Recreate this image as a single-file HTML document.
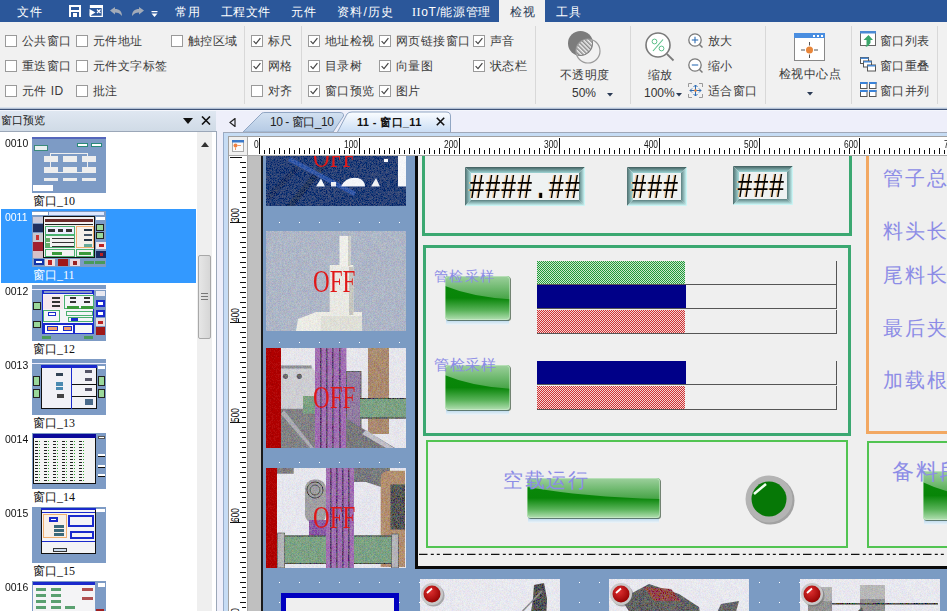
<!DOCTYPE html><html><head><meta charset="utf-8"><style>
html,body{margin:0;padding:0;width:947px;height:611px;overflow:hidden;background:#f1f1f1;font-family:"Liberation Sans",sans-serif;}
div,svg{position:absolute;box-sizing:border-box;}
.t{line-height:1;white-space:nowrap;}
.serif{font-family:"Liberation Serif",serif;}
</style></head><body>
<div style="left:0px;top:0px;width:947px;height:22px;background:#2b579a"></div>
<div style="left:499px;top:0px;width:46px;height:23px;background:#f1f1f1"></div>
<div class="t" style="left:17px;top:6px;font-size:12px;color:#fff;letter-spacing:0.5px">文件</div>
<div class="t" style="left:175px;top:6px;font-size:12px;color:#fff;letter-spacing:0.5px">常用</div>
<div class="t" style="left:221px;top:6px;font-size:12px;color:#fff;letter-spacing:0.3px">工程文件</div>
<div class="t" style="left:291px;top:6px;font-size:12px;color:#fff;letter-spacing:0.5px">元件</div>
<div class="t" style="left:337px;top:6px;font-size:12px;color:#fff;letter-spacing:1.2px">资料/历史</div>
<div class="t" style="left:412px;top:6px;font-size:12px;color:#fff;letter-spacing:0.6px"><span style='font-family:Liberation Serif,serif'>II</span>oT/能源管理</div>
<div class="t" style="left:556px;top:6px;font-size:12px;color:#fff;letter-spacing:0.5px">工具</div>
<div class="t" style="left:510px;top:6px;font-size:12px;color:#2b3b55;letter-spacing:0.5px">检视</div>
<svg style="left:69px;top:5px" width="12" height="12" viewBox="0 0 12 12" shape-rendering="crispEdges"><rect x="0" y="0" width="12" height="12" fill="#fff"/><rect x="2" y="1.5" width="8" height="3" fill="#2b579a"/><rect x="2" y="7" width="8" height="5" fill="#2b579a"/><rect x="4" y="8" width="4" height="4" fill="#fff"/></svg>
<svg style="left:89px;top:5px" width="14" height="12" viewBox="0 0 14 12"><path d="M1.5 8 V11.3 H13.3 V0.7 H1.5 V3" fill="none" stroke="#fff" stroke-width="1.3"/><rect x="1" y="0" width="13" height="3" fill="#fff"/><path d="M0.5 4 L6.5 7.5 L0.5 11 Z" fill="#fff"/><path d="M8 4.5 L11.5 8 M11.5 4.5 L8 8" stroke="#fff" stroke-width="1.2"/></svg>
<svg style="left:110px;top:7px" width="13" height="10" viewBox="0 0 13 10"><path d="M0 3.5 L5 0 L5 2 C9.5 2 12 4.5 12 9 C10 6.5 8 5.5 5 5.5 L5 7.5 Z" fill="#a3abb8"/></svg>
<svg style="left:131px;top:7px" width="13" height="10" viewBox="0 0 13 10"><path d="M13 3.5 L8 0 L8 2 C3.5 2 1 4.5 1 9 C3 6.5 5 5.5 8 5.5 L8 7.5 Z" fill="#a3abb8"/></svg>
<svg style="left:151px;top:11px" width="7" height="7" viewBox="0 0 7 7"><rect x="0.5" y="0" width="6" height="1.2" fill="#fff"/><path d="M0.5 2.5 L6.5 2.5 L3.5 6 Z" fill="#fff"/></svg>
<div style="left:0px;top:22px;width:947px;height:85px;background:#f1f1f1"></div>
<div style="left:0px;top:107px;width:947px;height:1px;background:#dae3ee"></div>
<div style="left:0px;top:108px;width:947px;height:1px;background:#b4c0d2"></div>
<div style="left:0px;top:109px;width:947px;height:1px;background:#3f5479"></div>
<div style="left:0px;top:110px;width:947px;height:1px;background:#f4f6fc"></div>
<div style="left:244px;top:26px;width:1px;height:78px;background:#d8d8d8"></div>
<div style="left:301px;top:26px;width:1px;height:78px;background:#d8d8d8"></div>
<div style="left:535px;top:26px;width:1px;height:78px;background:#d8d8d8"></div>
<div style="left:630px;top:26px;width:1px;height:78px;background:#d8d8d8"></div>
<div style="left:765px;top:26px;width:1px;height:78px;background:#d8d8d8"></div>
<div style="left:851px;top:26px;width:1px;height:78px;background:#d8d8d8"></div>
<div style="left:937px;top:26px;width:1px;height:78px;background:#d8d8d8"></div>
<div style="left:5px;top:35px;width:12px;height:12px;border:1px solid #9a9a9a;background:#fff"></div>
<div class="t" style="left:22px;top:35px;font-size:12px;color:#3c3c3c;letter-spacing:0.45px">公共窗口</div>
<div style="left:76px;top:35px;width:12px;height:12px;border:1px solid #9a9a9a;background:#fff"></div>
<div class="t" style="left:93px;top:35px;font-size:12px;color:#3c3c3c;letter-spacing:0.45px">元件地址</div>
<div style="left:171px;top:35px;width:12px;height:12px;border:1px solid #9a9a9a;background:#fff"></div>
<div class="t" style="left:188px;top:35px;font-size:12px;color:#3c3c3c;letter-spacing:0.45px">触控区域</div>
<div style="left:5px;top:60px;width:12px;height:12px;border:1px solid #9a9a9a;background:#fff"></div>
<div class="t" style="left:22px;top:60px;font-size:12px;color:#3c3c3c;letter-spacing:0.45px">重迭窗口</div>
<div style="left:76px;top:60px;width:12px;height:12px;border:1px solid #9a9a9a;background:#fff"></div>
<div class="t" style="left:93px;top:60px;font-size:12px;color:#3c3c3c;letter-spacing:0.45px">元件文字标签</div>
<div style="left:5px;top:85px;width:12px;height:12px;border:1px solid #9a9a9a;background:#fff"></div>
<div class="t" style="left:22px;top:85px;font-size:12px;color:#3c3c3c;letter-spacing:0.45px">元件 ID</div>
<div style="left:76px;top:85px;width:12px;height:12px;border:1px solid #9a9a9a;background:#fff"></div>
<div class="t" style="left:93px;top:85px;font-size:12px;color:#3c3c3c;letter-spacing:0.45px">批注</div>
<div style="left:251px;top:35px;width:12px;height:12px;border:1px solid #9a9a9a;background:#fff"></div>
<svg style="left:251px;top:35px" width="12" height="12" viewBox="0 0 12 12"><path d="M2.6 6.2 L5 8.6 L9.4 3.2" fill="none" stroke="#444" stroke-width="1.2"/></svg>
<div class="t" style="left:268px;top:35px;font-size:12px;color:#3c3c3c;letter-spacing:0.45px">标尺</div>
<div style="left:251px;top:60px;width:12px;height:12px;border:1px solid #9a9a9a;background:#fff"></div>
<svg style="left:251px;top:60px" width="12" height="12" viewBox="0 0 12 12"><path d="M2.6 6.2 L5 8.6 L9.4 3.2" fill="none" stroke="#444" stroke-width="1.2"/></svg>
<div class="t" style="left:268px;top:60px;font-size:12px;color:#3c3c3c;letter-spacing:0.45px">网格</div>
<div style="left:251px;top:85px;width:12px;height:12px;border:1px solid #9a9a9a;background:#fff"></div>
<div class="t" style="left:268px;top:85px;font-size:12px;color:#3c3c3c;letter-spacing:0.45px">对齐</div>
<div style="left:308px;top:35px;width:12px;height:12px;border:1px solid #9a9a9a;background:#fff"></div>
<svg style="left:308px;top:35px" width="12" height="12" viewBox="0 0 12 12"><path d="M2.6 6.2 L5 8.6 L9.4 3.2" fill="none" stroke="#444" stroke-width="1.2"/></svg>
<div class="t" style="left:325px;top:35px;font-size:12px;color:#3c3c3c;letter-spacing:0.45px">地址检视</div>
<div style="left:308px;top:60px;width:12px;height:12px;border:1px solid #9a9a9a;background:#fff"></div>
<svg style="left:308px;top:60px" width="12" height="12" viewBox="0 0 12 12"><path d="M2.6 6.2 L5 8.6 L9.4 3.2" fill="none" stroke="#444" stroke-width="1.2"/></svg>
<div class="t" style="left:325px;top:60px;font-size:12px;color:#3c3c3c;letter-spacing:0.45px">目录树</div>
<div style="left:308px;top:85px;width:12px;height:12px;border:1px solid #9a9a9a;background:#fff"></div>
<svg style="left:308px;top:85px" width="12" height="12" viewBox="0 0 12 12"><path d="M2.6 6.2 L5 8.6 L9.4 3.2" fill="none" stroke="#444" stroke-width="1.2"/></svg>
<div class="t" style="left:325px;top:85px;font-size:12px;color:#3c3c3c;letter-spacing:0.45px">窗口预览</div>
<div style="left:379px;top:35px;width:12px;height:12px;border:1px solid #9a9a9a;background:#fff"></div>
<svg style="left:379px;top:35px" width="12" height="12" viewBox="0 0 12 12"><path d="M2.6 6.2 L5 8.6 L9.4 3.2" fill="none" stroke="#444" stroke-width="1.2"/></svg>
<div class="t" style="left:396px;top:35px;font-size:12px;color:#3c3c3c;letter-spacing:0.45px">网页链接窗口</div>
<div style="left:379px;top:60px;width:12px;height:12px;border:1px solid #9a9a9a;background:#fff"></div>
<svg style="left:379px;top:60px" width="12" height="12" viewBox="0 0 12 12"><path d="M2.6 6.2 L5 8.6 L9.4 3.2" fill="none" stroke="#444" stroke-width="1.2"/></svg>
<div class="t" style="left:396px;top:60px;font-size:12px;color:#3c3c3c;letter-spacing:0.45px">向量图</div>
<div style="left:379px;top:85px;width:12px;height:12px;border:1px solid #9a9a9a;background:#fff"></div>
<svg style="left:379px;top:85px" width="12" height="12" viewBox="0 0 12 12"><path d="M2.6 6.2 L5 8.6 L9.4 3.2" fill="none" stroke="#444" stroke-width="1.2"/></svg>
<div class="t" style="left:396px;top:85px;font-size:12px;color:#3c3c3c;letter-spacing:0.45px">图片</div>
<div style="left:473px;top:35px;width:12px;height:12px;border:1px solid #9a9a9a;background:#fff"></div>
<svg style="left:473px;top:35px" width="12" height="12" viewBox="0 0 12 12"><path d="M2.6 6.2 L5 8.6 L9.4 3.2" fill="none" stroke="#444" stroke-width="1.2"/></svg>
<div class="t" style="left:490px;top:35px;font-size:12px;color:#3c3c3c;letter-spacing:0.45px">声音</div>
<div style="left:473px;top:60px;width:12px;height:12px;border:1px solid #9a9a9a;background:#fff"></div>
<svg style="left:473px;top:60px" width="12" height="12" viewBox="0 0 12 12"><path d="M2.6 6.2 L5 8.6 L9.4 3.2" fill="none" stroke="#444" stroke-width="1.2"/></svg>
<div class="t" style="left:490px;top:60px;font-size:12px;color:#3c3c3c;letter-spacing:0.45px">状态栏</div>
<svg style="left:565px;top:29px" width="40" height="36" viewBox="0 0 40 36">
<defs><pattern id="hat" width="3" height="3" patternUnits="userSpaceOnUse" patternTransform="rotate(-45)"><rect width="3" height="3" fill="#f0f0f0"/><rect width="1.5" height="3" fill="#8a8a8a"/></pattern>
<clipPath id="c1"><circle cx="15" cy="14" r="12"/></clipPath></defs>
<circle cx="15.5" cy="14.4" r="12.5" fill="#7c7c7c"/>
<circle cx="23" cy="22" r="12" fill="url(#hat)" clip-path="url(#c1)"/>
<circle cx="23" cy="22" r="12" fill="none" stroke="#9a9a9a" stroke-width="1.2"/>
</svg>
<div class="t" style="left:560px;top:69px;font-size:12px;color:#3c3c3c;letter-spacing:0.45px">不透明度</div>
<div class="t" style="left:572px;top:87px;font-size:12px;color:#333;">50%</div>
<svg style="left:607px;top:93px" width="6" height="4" viewBox="0 0 6 4"><path d="M0 0 L6 0 L3 3.5Z" fill="#2b3b55"/></svg>
<svg style="left:644px;top:31px" width="32" height="32" viewBox="0 0 32 32">
<circle cx="14" cy="14" r="12" fill="#fff" stroke="#7a7a7a" stroke-width="1.6"/>
<path d="M22.8 22.8 L29.5 29.5" stroke="#7a7a7a" stroke-width="1.8"/>
<path d="M9 20 L19 8.5" stroke="#5cc08a" stroke-width="1.1"/>
<circle cx="10.5" cy="10.5" r="2.4" fill="none" stroke="#5cc08a" stroke-width="1"/>
<circle cx="17.5" cy="17.5" r="2.4" fill="none" stroke="#5cc08a" stroke-width="1"/>
</svg>
<div class="t" style="left:648px;top:69px;font-size:12px;color:#3c3c3c;letter-spacing:0.45px">缩放</div>
<div class="t" style="left:644px;top:87px;font-size:12px;color:#333;">100%</div>
<svg style="left:676px;top:93px" width="6" height="4" viewBox="0 0 6 4"><path d="M0 0 L6 0 L3 3.5Z" fill="#2b3b55"/></svg>
<svg style="left:688px;top:33px" width="16" height="16" viewBox="0 0 16 16">
<circle cx="7" cy="7" r="6.2" fill="#fff" stroke="#7a7a7a" stroke-width="1.3"/>
<path d="M11.5 11.5 L14.5 14.5" stroke="#7a7a7a" stroke-width="1.5"/>
<path d="M3.8 7 L10.2 7" stroke="#2e6db4" stroke-width="1.1"/>
<path d="M7 3.8 L7 10.2" stroke="#2e6db4" stroke-width="1.1"/>
</svg>
<svg style="left:688px;top:58px" width="16" height="16" viewBox="0 0 16 16">
<circle cx="7" cy="7" r="6.2" fill="#fff" stroke="#7a7a7a" stroke-width="1.3"/>
<path d="M11.5 11.5 L14.5 14.5" stroke="#7a7a7a" stroke-width="1.5"/>
<path d="M3.8 7 L10.2 7" stroke="#2e6db4" stroke-width="1.1"/>

</svg>
<svg style="left:688px;top:83px" width="15" height="15" viewBox="0 0 15 15">
<path d="M0.5 4 V0.5 H4 M11 0.5 H14.5 V4 M14.5 11 V14.5 H11 M4 14.5 H0.5 V11" fill="none" stroke="#999" stroke-width="1"/>
<path d="M7.5 2 V13 M2 7.5 H13" stroke="#2e6db4" stroke-width="1"/>
<path d="M5.5 4 L7.5 2 L9.5 4 M5.5 11 L7.5 13 L9.5 11 M4 5.5 L2 7.5 L4 9.5 M11 5.5 L13 7.5 L11 9.5" fill="none" stroke="#2e6db4" stroke-width="1"/>
<circle cx="7.5" cy="7.5" r="1.3" fill="#e8863a"/>
</svg>
<div class="t" style="left:708px;top:35px;font-size:12px;color:#3c3c3c;letter-spacing:0.45px">放大</div>
<div class="t" style="left:708px;top:60px;font-size:12px;color:#3c3c3c;letter-spacing:0.45px">缩小</div>
<div class="t" style="left:708px;top:85px;font-size:12px;color:#3c3c3c;letter-spacing:0.45px">适合窗口</div>
<svg style="left:794px;top:33px" width="32" height="30" viewBox="0 0 32 30">
<rect x="0.5" y="0.5" width="30" height="27" fill="#fff" stroke="#888" stroke-width="1"/>
<rect x="0" y="0" width="31" height="5" fill="#4a8ee0"/>
<rect x="19" y="2" width="2" height="2" fill="#fff"/><rect x="23" y="2" width="2" height="2" fill="#fff"/><rect x="27" y="2" width="2" height="2" fill="#fff"/>
<path d="M15.5 9 V12.5 M15.5 21.5 V25 M7 17 H11 M20 17 H24" stroke="#555" stroke-width="1"/>
<circle cx="15.5" cy="17" r="3.5" fill="#e8863a"/>
</svg>
<div class="t" style="left:779px;top:68px;font-size:12px;color:#3c3c3c;letter-spacing:0.45px">检视中心点</div>
<svg style="left:807px;top:92px" width="6" height="4" viewBox="0 0 6 4"><path d="M0 0 L6 0 L3 3.5Z" fill="#2b3b55"/></svg>
<svg style="left:860px;top:31px" width="17" height="17" viewBox="0 0 17 17">
<rect x="0.5" y="0.5" width="15" height="14" fill="#fff" stroke="#666"/>
<rect x="0" y="0" width="16" height="2.5" fill="#4a8ad4"/>
<path d="M3.5 9 L8.5 4 L13 9 H10.5 V12 Q9 15 5.5 16 Q7 14 6.5 12 V9 Z" fill="#3aa66a"/>
</svg>
<svg style="left:860px;top:57px" width="17" height="15" viewBox="0 0 17 15">
<rect x="0.5" y="0.5" width="8" height="6" fill="#fff" stroke="#555"/>
<rect x="3.5" y="4" width="8" height="6" fill="#fff" stroke="#555"/>
<rect x="7.5" y="8" width="8" height="6" fill="#fff" stroke="#555"/>
<rect x="0.5" y="0.5" width="8" height="1.5" fill="#4a8ad4"/><rect x="3.5" y="4" width="8" height="1.5" fill="#4a8ad4"/><rect x="7.5" y="8" width="8" height="1.5" fill="#4a8ad4"/>
</svg>
<svg style="left:860px;top:82px" width="17" height="15" viewBox="0 0 17 15">
<rect x="0.5" y="0.5" width="6.5" height="6" fill="#fff" stroke="#555"/><rect x="9.5" y="0.5" width="6.5" height="6" fill="#fff" stroke="#555"/>
<rect x="0.5" y="8.5" width="6.5" height="6" fill="#fff" stroke="#555"/><rect x="9.5" y="8.5" width="6.5" height="6" fill="#fff" stroke="#555"/>
<rect x="0" y="0" width="7.5" height="2" fill="#3a82d8"/><rect x="9" y="0" width="7.5" height="2" fill="#3a82d8"/>
<rect x="0" y="8" width="7.5" height="2" fill="#3a82d8"/><rect x="9" y="8" width="7.5" height="2" fill="#3a82d8"/>
</svg>
<div class="t" style="left:880px;top:35px;font-size:12px;color:#3c3c3c;letter-spacing:0.45px">窗口列表</div>
<div class="t" style="left:880px;top:60px;font-size:12px;color:#3c3c3c;letter-spacing:0.45px">窗口重叠</div>
<div class="t" style="left:880px;top:85px;font-size:12px;color:#3c3c3c;letter-spacing:0.45px">窗口并列</div>
<div style="left:0px;top:111px;width:947px;height:500px;background:#eeeffa"></div>
<div style="left:0px;top:111px;width:216px;height:21px;background:linear-gradient(#dfe7f1,#cfdae6)"></div>
<div class="t" style="left:1px;top:115px;font-size:11.3px;color:#222;">窗口预览</div>
<svg style="left:183px;top:118px" width="10" height="6" viewBox="0 0 10 6"><path d="M0 0 H10 L5 6Z" fill="#111"/></svg>
<svg style="left:201px;top:116px" width="10" height="9" viewBox="0 0 10 9"><path d="M1 0.5 L9 8.5 M9 0.5 L1 8.5" stroke="#111" stroke-width="1.6"/></svg>
<div style="left:0px;top:131px;width:217px;height:480px;background:#fff;border-top:1px solid #9ba7b8;border-right:1px solid #9ba7b8"></div>
<div style="left:197px;top:132px;width:15px;height:479px;background:#efefef"></div>
<svg style="left:201px;top:142px" width="8" height="5" viewBox="0 0 8 5"><path d="M0 5 L4 0 L8 5Z" fill="#333"/></svg>
<div style="left:198px;top:255px;width:13px;height:84px;background:linear-gradient(90deg,#e6e6e6,#d6d6d6);border:1px solid #a8a8a8;border-radius:2px"></div>
<div style="left:201px;top:293px;width:7px;height:1px;background:#777"></div>
<div style="left:201px;top:296px;width:7px;height:1px;background:#777"></div>
<div style="left:201px;top:299px;width:7px;height:1px;background:#777"></div>
<div class="t" style="left:5px;top:138px;font-size:11px;color:#111;transform-origin:0 0;transform:scaleX(0.95)">0010</div>
<div style="left:32px;top:137px;width:74px;height:56px;background:#7d9bc5"></div>
<div style="left:32px;top:137px;width:74px;height:2px;background:#5566bb"></div>
<div style="left:34px;top:145px;width:14px;height:6px;background:#e8f0f0;border:1px solid #3a8a7a"></div>
<div style="left:77px;top:143px;width:11px;height:4px;background:#fff;border:1px solid #2a8a7a"></div>
<div style="left:91px;top:143px;width:11px;height:4px;background:#fff;border:1px solid #2a8a7a"></div>
<div style="left:50px;top:153px;width:38px;height:20px;border:1px solid #eee"></div>
<div style="left:44px;top:156px;width:14px;height:6px;background:#eee"></div>
<div style="left:44px;top:167px;width:14px;height:6px;background:#eee"></div>
<div style="left:44px;top:178px;width:14px;height:3px;background:#eee"></div>
<div style="left:63px;top:156px;width:14px;height:6px;background:#eee"></div>
<div style="left:63px;top:167px;width:14px;height:6px;background:#eee"></div>
<div style="left:63px;top:178px;width:14px;height:3px;background:#eee"></div>
<div style="left:82px;top:156px;width:14px;height:6px;background:#eee"></div>
<div style="left:82px;top:167px;width:14px;height:6px;background:#eee"></div>
<div style="left:82px;top:178px;width:14px;height:3px;background:#eee"></div>
<div style="left:33px;top:185px;width:20px;height:6px;background:#fff"></div>
<div class="t" style="left:33px;top:195px;font-size:12px;color:#111">窗口<span style="font-family:'Liberation Serif',serif">_10</span></div>
<div style="left:1px;top:209px;width:195px;height:74px;background:#3399ff"></div>
<div class="t" style="left:5px;top:212px;font-size:11px;color:#fff;transform-origin:0 0;transform:scaleX(0.95)">0011</div>
<div style="left:32px;top:211px;width:74px;height:56px;background:#7d9bc5"></div>
<div style="left:32px;top:212px;width:16px;height:3px;background:#fff"></div>
<div style="left:49px;top:212px;width:55px;height:3px;background:#dfe8ff"></div>
<div style="left:43px;top:216px;width:52px;height:42px;background:#f2f2f2;border:1px solid #111"></div>
<div style="left:45px;top:219px;width:48px;height:3px;background:#6a2a2a"></div>
<div style="left:45px;top:224px;width:48px;height:1px;background:#222"></div>
<div style="left:45px;top:226px;width:30px;height:9px;border:1px solid #4ab070;background:#eef"></div>
<div style="left:48px;top:229px;width:7px;height:3px;background:#333"></div>
<div style="left:58px;top:229px;width:5px;height:3px;background:#333"></div>
<div style="left:66px;top:229px;width:6px;height:3px;background:#333"></div>
<div style="left:45px;top:235px;width:30px;height:13px;border:1px solid #4ab070"></div>
<div style="left:52px;top:238px;width:22px;height:1px;background:#333"></div>
<div style="left:52px;top:242px;width:22px;height:1px;background:#333"></div>
<div style="left:52px;top:246px;width:22px;height:1px;background:#333"></div>
<div style="left:46px;top:238px;width:4px;height:4px;background:#6a6"></div>
<div style="left:46px;top:243px;width:4px;height:4px;background:#6a6"></div>
<div style="left:45px;top:249px;width:30px;height:8px;border:1px solid #4ab070"></div>
<div style="left:52px;top:252px;width:10px;height:3px;background:#3a9a3a"></div>
<div style="left:76px;top:226px;width:18px;height:22px;border:1px solid #f0b070;background:#f4f0ea"></div>
<div style="left:84px;top:229px;width:8px;height:2px;background:#234"></div>
<div style="left:84px;top:234px;width:8px;height:2px;background:#456"></div>
<div style="left:84px;top:239px;width:8px;height:2px;background:#234"></div>
<div style="left:84px;top:244px;width:8px;height:3px;background:#6a9"></div>
<div style="left:76px;top:249px;width:18px;height:8px;border:1px solid #4ab070"></div>
<div style="left:79px;top:252px;width:12px;height:3px;background:#3a9a3a"></div>
<div style="left:33px;top:217px;width:10px;height:6px;background:#ccd"></div>
<div style="left:33px;top:224px;width:10px;height:8px;background:#203060"></div>
<div style="left:33px;top:233px;width:10px;height:9px;background:#c8c8d0"></div>
<div style="left:36px;top:235px;width:3px;height:5px;background:#c33"></div>
<div style="left:33px;top:242px;width:10px;height:9px;background:#a02030"></div>
<div style="left:33px;top:251px;width:10px;height:7px;background:#d8c0c8"></div>
<div style="left:96px;top:217px;width:9px;height:3px;background:#fff"></div>
<div style="left:96px;top:224px;width:8px;height:7px;background:#9ad89a;border:1px solid #222"></div>
<div style="left:96px;top:232px;width:8px;height:7px;background:#9ad89a;border:1px solid #222"></div>
<div style="left:96px;top:242px;width:10px;height:7px;background:#f0e8ea"></div>
<div style="left:99px;top:244px;width:5px;height:3px;background:#b22"></div>
<div style="left:96px;top:251px;width:10px;height:7px;background:#1a2a60"></div>
<div style="left:100px;top:253px;width:3px;height:3px;background:#b22"></div>
<div style="left:34px;top:259px;width:10px;height:6px;background:#fff;border:2px solid #1133aa"></div>
<div style="left:45px;top:259px;width:10px;height:7px;background:#f0e0e0"></div>
<div style="left:48px;top:260px;width:4px;height:5px;background:#b22"></div>
<div style="left:58px;top:259px;width:10px;height:7px;background:#a01818"></div>
<div style="left:70px;top:259px;width:10px;height:7px;background:#e8d8e0"></div>
<div style="left:73px;top:261px;width:4px;height:4px;background:#922"></div>
<div style="left:84px;top:261px;width:10px;height:3px;background:#4a9a5a"></div>
<div style="left:95px;top:261px;width:10px;height:3px;background:#4a9a5a"></div>
<div class="t" style="left:33px;top:269px;font-size:12px;color:#fff">窗口<span style="font-family:'Liberation Serif',serif">_11</span></div>
<div class="t" style="left:5px;top:286px;font-size:11px;color:#111;transform-origin:0 0;transform:scaleX(0.95)">0012</div>
<div style="left:32px;top:285px;width:74px;height:56px;background:#7d9bc5"></div>
<div style="left:32px;top:289px;width:74px;height:1px;background:#eef"></div>
<div style="left:42px;top:290px;width:52px;height:44px;background:#f4f4f8;border:1px solid #1a2acc"></div>
<div style="left:42px;top:290px;width:52px;height:4px;background:#1a2acc"></div>
<div style="left:44px;top:291px;width:48px;height:2px;background:#8a9ac8"></div>
<div style="left:43px;top:295px;width:20px;height:14px;background:#f6e8ee"></div>
<div style="left:52px;top:297px;width:8px;height:2px;background:#333"></div>
<div style="left:52px;top:301px;width:8px;height:2px;background:#333"></div>
<div style="left:52px;top:305px;width:8px;height:2px;background:#333"></div>
<div style="left:64px;top:295px;width:30px;height:14px;border:1px solid #4ab070"></div>
<div style="left:70px;top:297px;width:6px;height:2px;background:#333"></div>
<div style="left:84px;top:297px;width:6px;height:2px;background:#333"></div>
<div style="left:70px;top:301px;width:6px;height:2px;background:#333"></div>
<div style="left:84px;top:301px;width:6px;height:2px;background:#333"></div>
<div style="left:67px;top:306px;width:12px;height:3px;background:#3a9a3a"></div>
<div style="left:81px;top:306px;width:12px;height:3px;background:#3a9a3a"></div>
<div style="left:43px;top:310px;width:17px;height:12px;border:1px solid #4ab070"></div>
<div style="left:48px;top:312px;width:8px;height:4px;background:#fff;border:1px solid #1a2acc"></div>
<div style="left:66px;top:311px;width:27px;height:5px;border:1px solid #4ab070"></div>
<div style="left:68px;top:317px;width:25px;height:5px;border:1px solid #4ab070"></div>
<div style="left:71px;top:318px;width:7px;height:3px;background:#1a2acc"></div>
<div style="left:42px;top:323px;width:52px;height:11px;background:#1a2acc"></div>
<div style="left:45px;top:325px;width:28px;height:8px;background:#fff"></div>
<div style="left:47px;top:326px;width:11px;height:5px;background:#1a2acc"></div>
<div style="left:48px;top:327px;width:9px;height:3px;background:#f0a070"></div>
<div style="left:63px;top:326px;width:9px;height:5px;background:#1a2acc"></div>
<div style="left:64px;top:327px;width:7px;height:3px;background:#f0a070"></div>
<div style="left:75px;top:325px;width:17px;height:8px;background:#f8f8f8"></div>
<div style="left:33px;top:302px;width:8px;height:8px;background:#9ad89a;border:1px solid #222"></div>
<div style="left:33px;top:321px;width:8px;height:7px;background:#9ad89a;border:1px solid #222"></div>
<div style="left:96px;top:291px;width:9px;height:5px;background:#e8e8f0"></div>
<div style="left:96px;top:300px;width:9px;height:7px;background:#fff;border:2px solid #1a2acc"></div>
<div style="left:96px;top:310px;width:9px;height:7px;background:#fff;border:2px solid #1a2acc"></div>
<div style="left:96px;top:318px;width:9px;height:8px;background:#e8e0e0"></div>
<div style="left:98px;top:321px;width:5px;height:3px;background:#b22"></div>
<div style="left:96px;top:327px;width:9px;height:8px;background:#a01818"></div>
<div style="left:42px;top:336px;width:9px;height:3px;background:#4a9a5a"></div>
<div style="left:84px;top:336px;width:9px;height:3px;background:#4a9a5a"></div>
<div class="t" style="left:33px;top:343px;font-size:12px;color:#111">窗口<span style="font-family:'Liberation Serif',serif">_12</span></div>
<div class="t" style="left:5px;top:360px;font-size:11px;color:#111;transform-origin:0 0;transform:scaleX(0.95)">0013</div>
<div style="left:32px;top:359px;width:74px;height:56px;background:#7d9bc5"></div>
<div style="left:32px;top:363px;width:74px;height:1px;background:#eef"></div>
<div style="left:41px;top:365px;width:56px;height:44px;background:#f2f2f6;border:1px solid #111"></div>
<div style="left:41px;top:365px;width:56px;height:3px;background:#1a2acc"></div>
<div style="left:71px;top:368px;width:1px;height:41px;background:#1a2acc"></div>
<div style="left:72px;top:384px;width:25px;height:1px;background:#111"></div>
<div style="left:72px;top:396px;width:25px;height:1px;background:#111"></div>
<div style="left:33px;top:376px;width:7px;height:10px;background:#9ad89a;border:1px solid #222"></div>
<div style="left:33px;top:389px;width:7px;height:9px;background:#9ad89a;border:1px solid #222"></div>
<div style="left:98px;top:376px;width:7px;height:10px;background:#9ad89a;border:1px solid #222"></div>
<div style="left:98px;top:389px;width:7px;height:9px;background:#9ad89a;border:1px solid #222"></div>
<div style="left:56px;top:373px;width:7px;height:3px;background:#345"></div>
<div style="left:56px;top:382px;width:7px;height:4px;background:#4a8ab0"></div>
<div style="left:56px;top:387px;width:7px;height:3px;background:#4a8ab0"></div>
<div style="left:57px;top:394px;width:7px;height:4px;background:#444"></div>
<div style="left:85px;top:370px;width:7px;height:3px;background:#556"></div>
<div style="left:85px;top:378px;width:7px;height:3px;background:#556"></div>
<div style="left:85px;top:388px;width:7px;height:3px;background:#556"></div>
<div style="left:85px;top:399px;width:8px;height:6px;background:#4a6a8a"></div>
<div style="left:98px;top:366px;width:7px;height:3px;background:#fff"></div>
<div class="t" style="left:33px;top:417px;font-size:12px;color:#111">窗口<span style="font-family:'Liberation Serif',serif">_13</span></div>
<div class="t" style="left:5px;top:434px;font-size:11px;color:#111;transform-origin:0 0;transform:scaleX(0.95)">0014</div>
<div style="left:32px;top:433px;width:74px;height:56px;background:#7d9bc5"></div>
<div style="left:33px;top:434px;width:63px;height:50px;background:#f4f4f4;border:1px solid #111"></div>
<div style="left:33px;top:434px;width:63px;height:4px;background:#0a0a9a"></div>
<div style="left:35px;top:441px;width:3px;height:1px;background:#222"></div>
<div style="left:39px;top:441px;width:1px;height:1px;background:#3a3"></div>
<div style="left:35px;top:444px;width:3px;height:1px;background:#222"></div>
<div style="left:39px;top:444px;width:1px;height:1px;background:#3a3"></div>
<div style="left:35px;top:447px;width:3px;height:1px;background:#222"></div>
<div style="left:39px;top:447px;width:1px;height:1px;background:#3a3"></div>
<div style="left:35px;top:450px;width:3px;height:1px;background:#222"></div>
<div style="left:39px;top:450px;width:1px;height:1px;background:#3a3"></div>
<div style="left:35px;top:453px;width:3px;height:1px;background:#222"></div>
<div style="left:39px;top:453px;width:1px;height:1px;background:#3a3"></div>
<div style="left:35px;top:456px;width:3px;height:1px;background:#222"></div>
<div style="left:39px;top:456px;width:1px;height:1px;background:#3a3"></div>
<div style="left:35px;top:459px;width:3px;height:1px;background:#222"></div>
<div style="left:39px;top:459px;width:1px;height:1px;background:#3a3"></div>
<div style="left:35px;top:462px;width:3px;height:1px;background:#222"></div>
<div style="left:39px;top:462px;width:1px;height:1px;background:#3a3"></div>
<div style="left:35px;top:465px;width:3px;height:1px;background:#222"></div>
<div style="left:39px;top:465px;width:1px;height:1px;background:#3a3"></div>
<div style="left:35px;top:468px;width:3px;height:1px;background:#222"></div>
<div style="left:39px;top:468px;width:1px;height:1px;background:#3a3"></div>
<div style="left:35px;top:471px;width:3px;height:1px;background:#222"></div>
<div style="left:39px;top:471px;width:1px;height:1px;background:#3a3"></div>
<div style="left:35px;top:474px;width:3px;height:1px;background:#222"></div>
<div style="left:39px;top:474px;width:1px;height:1px;background:#3a3"></div>
<div style="left:35px;top:477px;width:3px;height:1px;background:#222"></div>
<div style="left:39px;top:477px;width:1px;height:1px;background:#3a3"></div>
<div style="left:35px;top:480px;width:3px;height:1px;background:#222"></div>
<div style="left:39px;top:480px;width:1px;height:1px;background:#3a3"></div>
<div style="left:44px;top:441px;width:3px;height:1px;background:#222"></div>
<div style="left:48px;top:441px;width:1px;height:1px;background:#3a3"></div>
<div style="left:44px;top:444px;width:3px;height:1px;background:#222"></div>
<div style="left:48px;top:444px;width:1px;height:1px;background:#3a3"></div>
<div style="left:44px;top:447px;width:3px;height:1px;background:#222"></div>
<div style="left:48px;top:447px;width:1px;height:1px;background:#3a3"></div>
<div style="left:44px;top:450px;width:3px;height:1px;background:#222"></div>
<div style="left:48px;top:450px;width:1px;height:1px;background:#3a3"></div>
<div style="left:44px;top:453px;width:3px;height:1px;background:#222"></div>
<div style="left:48px;top:453px;width:1px;height:1px;background:#3a3"></div>
<div style="left:44px;top:456px;width:3px;height:1px;background:#222"></div>
<div style="left:48px;top:456px;width:1px;height:1px;background:#3a3"></div>
<div style="left:44px;top:459px;width:3px;height:1px;background:#222"></div>
<div style="left:48px;top:459px;width:1px;height:1px;background:#3a3"></div>
<div style="left:44px;top:462px;width:3px;height:1px;background:#222"></div>
<div style="left:48px;top:462px;width:1px;height:1px;background:#3a3"></div>
<div style="left:44px;top:465px;width:3px;height:1px;background:#222"></div>
<div style="left:48px;top:465px;width:1px;height:1px;background:#3a3"></div>
<div style="left:44px;top:468px;width:3px;height:1px;background:#222"></div>
<div style="left:48px;top:468px;width:1px;height:1px;background:#3a3"></div>
<div style="left:44px;top:471px;width:3px;height:1px;background:#222"></div>
<div style="left:48px;top:471px;width:1px;height:1px;background:#3a3"></div>
<div style="left:44px;top:474px;width:3px;height:1px;background:#222"></div>
<div style="left:48px;top:474px;width:1px;height:1px;background:#3a3"></div>
<div style="left:44px;top:477px;width:3px;height:1px;background:#222"></div>
<div style="left:48px;top:477px;width:1px;height:1px;background:#3a3"></div>
<div style="left:44px;top:480px;width:3px;height:1px;background:#222"></div>
<div style="left:48px;top:480px;width:1px;height:1px;background:#3a3"></div>
<div style="left:53px;top:441px;width:3px;height:1px;background:#222"></div>
<div style="left:57px;top:441px;width:1px;height:1px;background:#3a3"></div>
<div style="left:53px;top:444px;width:3px;height:1px;background:#222"></div>
<div style="left:57px;top:444px;width:1px;height:1px;background:#3a3"></div>
<div style="left:53px;top:447px;width:3px;height:1px;background:#222"></div>
<div style="left:57px;top:447px;width:1px;height:1px;background:#3a3"></div>
<div style="left:53px;top:450px;width:3px;height:1px;background:#222"></div>
<div style="left:57px;top:450px;width:1px;height:1px;background:#3a3"></div>
<div style="left:53px;top:453px;width:3px;height:1px;background:#222"></div>
<div style="left:57px;top:453px;width:1px;height:1px;background:#3a3"></div>
<div style="left:53px;top:456px;width:3px;height:1px;background:#222"></div>
<div style="left:57px;top:456px;width:1px;height:1px;background:#3a3"></div>
<div style="left:53px;top:459px;width:3px;height:1px;background:#222"></div>
<div style="left:57px;top:459px;width:1px;height:1px;background:#3a3"></div>
<div style="left:53px;top:462px;width:3px;height:1px;background:#222"></div>
<div style="left:57px;top:462px;width:1px;height:1px;background:#3a3"></div>
<div style="left:53px;top:465px;width:3px;height:1px;background:#222"></div>
<div style="left:57px;top:465px;width:1px;height:1px;background:#3a3"></div>
<div style="left:53px;top:468px;width:3px;height:1px;background:#222"></div>
<div style="left:57px;top:468px;width:1px;height:1px;background:#3a3"></div>
<div style="left:53px;top:471px;width:3px;height:1px;background:#222"></div>
<div style="left:57px;top:471px;width:1px;height:1px;background:#3a3"></div>
<div style="left:53px;top:474px;width:3px;height:1px;background:#222"></div>
<div style="left:57px;top:474px;width:1px;height:1px;background:#3a3"></div>
<div style="left:53px;top:477px;width:3px;height:1px;background:#222"></div>
<div style="left:57px;top:477px;width:1px;height:1px;background:#3a3"></div>
<div style="left:53px;top:480px;width:3px;height:1px;background:#222"></div>
<div style="left:57px;top:480px;width:1px;height:1px;background:#3a3"></div>
<div style="left:62px;top:441px;width:3px;height:1px;background:#222"></div>
<div style="left:66px;top:441px;width:1px;height:1px;background:#3a3"></div>
<div style="left:62px;top:444px;width:3px;height:1px;background:#222"></div>
<div style="left:66px;top:444px;width:1px;height:1px;background:#3a3"></div>
<div style="left:62px;top:447px;width:3px;height:1px;background:#222"></div>
<div style="left:66px;top:447px;width:1px;height:1px;background:#3a3"></div>
<div style="left:62px;top:450px;width:3px;height:1px;background:#222"></div>
<div style="left:66px;top:450px;width:1px;height:1px;background:#3a3"></div>
<div style="left:62px;top:453px;width:3px;height:1px;background:#222"></div>
<div style="left:66px;top:453px;width:1px;height:1px;background:#3a3"></div>
<div style="left:62px;top:456px;width:3px;height:1px;background:#222"></div>
<div style="left:66px;top:456px;width:1px;height:1px;background:#3a3"></div>
<div style="left:62px;top:459px;width:3px;height:1px;background:#222"></div>
<div style="left:66px;top:459px;width:1px;height:1px;background:#3a3"></div>
<div style="left:62px;top:462px;width:3px;height:1px;background:#222"></div>
<div style="left:66px;top:462px;width:1px;height:1px;background:#3a3"></div>
<div style="left:62px;top:465px;width:3px;height:1px;background:#222"></div>
<div style="left:66px;top:465px;width:1px;height:1px;background:#3a3"></div>
<div style="left:62px;top:468px;width:3px;height:1px;background:#222"></div>
<div style="left:66px;top:468px;width:1px;height:1px;background:#3a3"></div>
<div style="left:62px;top:471px;width:3px;height:1px;background:#222"></div>
<div style="left:66px;top:471px;width:1px;height:1px;background:#3a3"></div>
<div style="left:62px;top:474px;width:3px;height:1px;background:#222"></div>
<div style="left:66px;top:474px;width:1px;height:1px;background:#3a3"></div>
<div style="left:62px;top:477px;width:3px;height:1px;background:#222"></div>
<div style="left:66px;top:477px;width:1px;height:1px;background:#3a3"></div>
<div style="left:62px;top:480px;width:3px;height:1px;background:#222"></div>
<div style="left:66px;top:480px;width:1px;height:1px;background:#3a3"></div>
<div style="left:70px;top:441px;width:3px;height:1px;background:#222"></div>
<div style="left:74px;top:441px;width:1px;height:1px;background:#3a3"></div>
<div style="left:70px;top:444px;width:3px;height:1px;background:#222"></div>
<div style="left:74px;top:444px;width:1px;height:1px;background:#3a3"></div>
<div style="left:70px;top:447px;width:3px;height:1px;background:#222"></div>
<div style="left:74px;top:447px;width:1px;height:1px;background:#3a3"></div>
<div style="left:70px;top:450px;width:3px;height:1px;background:#222"></div>
<div style="left:74px;top:450px;width:1px;height:1px;background:#3a3"></div>
<div style="left:70px;top:453px;width:3px;height:1px;background:#222"></div>
<div style="left:74px;top:453px;width:1px;height:1px;background:#3a3"></div>
<div style="left:70px;top:456px;width:3px;height:1px;background:#222"></div>
<div style="left:74px;top:456px;width:1px;height:1px;background:#3a3"></div>
<div style="left:70px;top:459px;width:3px;height:1px;background:#222"></div>
<div style="left:74px;top:459px;width:1px;height:1px;background:#3a3"></div>
<div style="left:70px;top:462px;width:3px;height:1px;background:#222"></div>
<div style="left:74px;top:462px;width:1px;height:1px;background:#3a3"></div>
<div style="left:70px;top:465px;width:3px;height:1px;background:#222"></div>
<div style="left:74px;top:465px;width:1px;height:1px;background:#3a3"></div>
<div style="left:70px;top:468px;width:3px;height:1px;background:#222"></div>
<div style="left:74px;top:468px;width:1px;height:1px;background:#3a3"></div>
<div style="left:70px;top:471px;width:3px;height:1px;background:#222"></div>
<div style="left:74px;top:471px;width:1px;height:1px;background:#3a3"></div>
<div style="left:70px;top:474px;width:3px;height:1px;background:#222"></div>
<div style="left:74px;top:474px;width:1px;height:1px;background:#3a3"></div>
<div style="left:70px;top:477px;width:3px;height:1px;background:#222"></div>
<div style="left:74px;top:477px;width:1px;height:1px;background:#3a3"></div>
<div style="left:70px;top:480px;width:3px;height:1px;background:#222"></div>
<div style="left:74px;top:480px;width:1px;height:1px;background:#3a3"></div>
<div style="left:79px;top:441px;width:3px;height:1px;background:#222"></div>
<div style="left:83px;top:441px;width:1px;height:1px;background:#3a3"></div>
<div style="left:79px;top:444px;width:3px;height:1px;background:#222"></div>
<div style="left:83px;top:444px;width:1px;height:1px;background:#3a3"></div>
<div style="left:79px;top:447px;width:3px;height:1px;background:#222"></div>
<div style="left:83px;top:447px;width:1px;height:1px;background:#3a3"></div>
<div style="left:79px;top:450px;width:3px;height:1px;background:#222"></div>
<div style="left:83px;top:450px;width:1px;height:1px;background:#3a3"></div>
<div style="left:79px;top:453px;width:3px;height:1px;background:#222"></div>
<div style="left:83px;top:453px;width:1px;height:1px;background:#3a3"></div>
<div style="left:79px;top:456px;width:3px;height:1px;background:#222"></div>
<div style="left:83px;top:456px;width:1px;height:1px;background:#3a3"></div>
<div style="left:79px;top:459px;width:3px;height:1px;background:#222"></div>
<div style="left:83px;top:459px;width:1px;height:1px;background:#3a3"></div>
<div style="left:79px;top:462px;width:3px;height:1px;background:#222"></div>
<div style="left:83px;top:462px;width:1px;height:1px;background:#3a3"></div>
<div style="left:79px;top:465px;width:3px;height:1px;background:#222"></div>
<div style="left:83px;top:465px;width:1px;height:1px;background:#3a3"></div>
<div style="left:79px;top:468px;width:3px;height:1px;background:#222"></div>
<div style="left:83px;top:468px;width:1px;height:1px;background:#3a3"></div>
<div style="left:79px;top:471px;width:3px;height:1px;background:#222"></div>
<div style="left:83px;top:471px;width:1px;height:1px;background:#3a3"></div>
<div style="left:79px;top:474px;width:3px;height:1px;background:#222"></div>
<div style="left:83px;top:474px;width:1px;height:1px;background:#3a3"></div>
<div style="left:79px;top:477px;width:3px;height:1px;background:#222"></div>
<div style="left:83px;top:477px;width:1px;height:1px;background:#3a3"></div>
<div style="left:79px;top:480px;width:3px;height:1px;background:#222"></div>
<div style="left:83px;top:480px;width:1px;height:1px;background:#3a3"></div>
<div style="left:98px;top:436px;width:7px;height:3px;background:#fff;border:1px solid #555"></div>
<div style="left:98px;top:454px;width:7px;height:3px;background:#fff;border-bottom:1px solid #111"></div>
<div style="left:98px;top:465px;width:7px;height:3px;background:#fff;border-bottom:1px solid #111"></div>
<div style="left:98px;top:474px;width:7px;height:3px;background:#fff;border-bottom:1px solid #111"></div>
<div class="t" style="left:33px;top:491px;font-size:12px;color:#111">窗口<span style="font-family:'Liberation Serif',serif">_14</span></div>
<div class="t" style="left:5px;top:508px;font-size:11px;color:#111;transform-origin:0 0;transform:scaleX(0.95)">0015</div>
<div style="left:32px;top:507px;width:74px;height:56px;background:#7d9bc5"></div>
<div style="left:41px;top:508px;width:55px;height:46px;background:#f4f4f6;border:1px solid #111"></div>
<div style="left:41px;top:508px;width:55px;height:2px;background:#1a2acc"></div>
<div style="left:42px;top:512px;width:53px;height:1px;background:#1a2acc"></div>
<div style="left:43px;top:514px;width:24px;height:24px;border:1px solid #f0b070;background:#f8f0e8"></div>
<div style="left:49px;top:517px;width:9px;height:5px;border:2px solid #1a2acc;background:#fff"></div>
<div style="left:54px;top:525px;width:10px;height:3px;background:#3a6a7a"></div>
<div style="left:54px;top:529px;width:10px;height:3px;background:#3a6a7a"></div>
<div style="left:54px;top:533px;width:10px;height:3px;background:#3a6a7a"></div>
<div style="left:68px;top:515px;width:26px;height:12px;border:2px solid #1a2acc"></div>
<div style="left:70px;top:531px;width:24px;height:8px;border:2px solid #1a2acc"></div>
<div style="left:42px;top:541px;width:53px;height:1px;background:#1a2acc"></div>
<div style="left:53px;top:548px;width:14px;height:4px;border:1px solid #333;background:#cde"></div>
<div style="left:96px;top:509px;width:9px;height:3px;background:#fff"></div>
<div class="t" style="left:33px;top:565px;font-size:12px;color:#111">窗口<span style="font-family:'Liberation Serif',serif">_15</span></div>
<div class="t" style="left:5px;top:582px;font-size:11px;color:#111;transform-origin:0 0;transform:scaleX(0.95)">0016</div>
<div style="left:32px;top:581px;width:74px;height:56px;background:#7d9bc5"></div>
<div style="left:33px;top:582px;width:62px;height:54px;background:#f4f4f6"></div>
<div style="left:33px;top:582px;width:62px;height:3px;background:#1a2acc"></div>
<div style="left:36px;top:588px;width:10px;height:3px;background:#5aa070"></div>
<div style="left:36px;top:594px;width:10px;height:3px;background:#5aa070"></div>
<div style="left:36px;top:600px;width:10px;height:3px;background:#5aa070"></div>
<div style="left:36px;top:606px;width:10px;height:3px;background:#5aa070"></div>
<div style="left:36px;top:612px;width:10px;height:3px;background:#5aa070"></div>
<div style="left:51px;top:588px;width:10px;height:3px;background:#5aa070"></div>
<div style="left:51px;top:594px;width:10px;height:3px;background:#5aa070"></div>
<div style="left:51px;top:600px;width:10px;height:3px;background:#5aa070"></div>
<div style="left:51px;top:606px;width:10px;height:3px;background:#5aa070"></div>
<div style="left:51px;top:612px;width:10px;height:3px;background:#5aa070"></div>
<div style="left:65px;top:606px;width:10px;height:3px;background:#5aa070"></div>
<div style="left:65px;top:612px;width:10px;height:3px;background:#5aa070"></div>
<div style="left:82px;top:588px;width:11px;height:3px;background:#b05050"></div>
<div style="left:82px;top:597px;width:11px;height:3px;background:#b05050"></div>
<div style="left:98px;top:583px;width:7px;height:4px;background:#fff"></div>
<div style="left:96px;top:609px;width:8px;height:8px;background:#a02020"></div>
<div class="t" style="left:33px;top:639px;font-size:12px;color:#111">窗口<span style="font-family:'Liberation Serif',serif">_16</span></div>
<svg style="left:229px;top:118px" width="7" height="9" viewBox="0 0 7 9"><path d="M6 0.5 L1 4.5 L6 8.5 Z" fill="none" stroke="#222" stroke-width="1.2"/></svg>
<svg style="left:240px;top:110px" width="215" height="24" viewBox="0 0 215 24">
<defs><linearGradient id="tg1" x1="0" y1="0" x2="0" y2="1"><stop offset="0" stop-color="#d3e1f1"/><stop offset="1" stop-color="#b5cae4"/></linearGradient>
<linearGradient id="tg2" x1="0" y1="0" x2="0" y2="1"><stop offset="0" stop-color="#fbfdff"/><stop offset="1" stop-color="#c8dcf4"/></linearGradient></defs>
<path d="M3 22 L22 3 Q23 2.5 25 2.5 L100 2.5 Q104 2.5 103.5 6 L93 22 Z" fill="url(#tg1)" stroke="#91a6c3" stroke-width="1"/>
<path d="M97 23 L107 4 Q108.5 2 112 2 L206 2 Q210.5 2 210.5 6 L210.5 23" fill="url(#tg2)" stroke="#91a6c3" stroke-width="1"/><rect x="97.5" y="22" width="112.5" height="2" fill="#c6dcf4"/>
</svg>
<div class="t" style="left:270px;top:116px;font-size:12px;color:#222;letter-spacing:-0.45px">10 - 窗口_10</div>
<div class="t" style="left:357px;top:117px;font-size:11px;color:#111;letter-spacing:0.35px"><b>11 - 窗口_11</b></div>
<svg style="left:436px;top:117px" width="9" height="9" viewBox="0 0 9 9"><path d="M0.8 0.8 L8.2 8.2 M8.2 0.8 L0.8 8.2" stroke="#111" stroke-width="1.6"/></svg>
<div style="left:223px;top:132px;width:724px;height:479px;background:#c6dcf4;border-left:1px solid #97abc8;border-top:1px solid #a0a8b8"></div>
<div style="left:228px;top:136px;width:719px;height:475px;background:#fff;border-left:1px solid #a0a0a0;border-top:1px solid #a0a0a0"></div>
<div style="left:229px;top:137px;width:19px;height:19px;background:#f0f0f0;border-right:1px solid #a8a8a8;border-bottom:1px solid #a8a8a8"></div>
<svg style="left:232px;top:140px" width="12" height="12" viewBox="0 0 12 12"><rect x="0.5" y="0.5" width="11" height="11" fill="#fafafa" stroke="#aaa"/><rect x="0" y="0" width="12" height="2.5" fill="#3a78c8"/><circle cx="3.5" cy="5.5" r="2" fill="#f08040"/><path d="M5.5 5.5 H9 M3.5 7.5 V10" stroke="#f08040" stroke-width="0.8"/></svg>
<div style="left:248px;top:137px;width:699px;height:18px;background:#fff"></div>
<div style="left:248px;top:155px;width:699px;height:1px;background:#a8a8a8"></div>
<svg style="left:248px;top:137px" width="699" height="18" viewBox="0 0 699 18" fill="#111"><rect x="11" y="1" width="1" height="16"/><rect x="16" y="13" width="1" height="4"/><rect x="21" y="11" width="1" height="6"/><rect x="26" y="13" width="1" height="4"/><rect x="31" y="11" width="1" height="6"/><rect x="36" y="13" width="1" height="4"/><rect x="41" y="11" width="1" height="6"/><rect x="46" y="13" width="1" height="4"/><rect x="51" y="11" width="1" height="6"/><rect x="56" y="13" width="1" height="4"/><rect x="61" y="11" width="1" height="6"/><rect x="66" y="13" width="1" height="4"/><rect x="71" y="11" width="1" height="6"/><rect x="76" y="13" width="1" height="4"/><rect x="81" y="11" width="1" height="6"/><rect x="86" y="13" width="1" height="4"/><rect x="91" y="11" width="1" height="6"/><rect x="96" y="13" width="1" height="4"/><rect x="101" y="11" width="1" height="6"/><rect x="106" y="13" width="1" height="4"/><rect x="111" y="1" width="1" height="16"/><rect x="116" y="13" width="1" height="4"/><rect x="121" y="11" width="1" height="6"/><rect x="126" y="13" width="1" height="4"/><rect x="131" y="11" width="1" height="6"/><rect x="136" y="13" width="1" height="4"/><rect x="141" y="11" width="1" height="6"/><rect x="146" y="13" width="1" height="4"/><rect x="151" y="11" width="1" height="6"/><rect x="156" y="13" width="1" height="4"/><rect x="161" y="11" width="1" height="6"/><rect x="166" y="13" width="1" height="4"/><rect x="171" y="11" width="1" height="6"/><rect x="176" y="13" width="1" height="4"/><rect x="181" y="11" width="1" height="6"/><rect x="186" y="13" width="1" height="4"/><rect x="191" y="11" width="1" height="6"/><rect x="196" y="13" width="1" height="4"/><rect x="201" y="11" width="1" height="6"/><rect x="206" y="13" width="1" height="4"/><rect x="211" y="1" width="1" height="16"/><rect x="216" y="13" width="1" height="4"/><rect x="221" y="11" width="1" height="6"/><rect x="226" y="13" width="1" height="4"/><rect x="231" y="11" width="1" height="6"/><rect x="236" y="13" width="1" height="4"/><rect x="241" y="11" width="1" height="6"/><rect x="246" y="13" width="1" height="4"/><rect x="251" y="11" width="1" height="6"/><rect x="256" y="13" width="1" height="4"/><rect x="261" y="11" width="1" height="6"/><rect x="266" y="13" width="1" height="4"/><rect x="271" y="11" width="1" height="6"/><rect x="276" y="13" width="1" height="4"/><rect x="281" y="11" width="1" height="6"/><rect x="286" y="13" width="1" height="4"/><rect x="291" y="11" width="1" height="6"/><rect x="296" y="13" width="1" height="4"/><rect x="301" y="11" width="1" height="6"/><rect x="306" y="13" width="1" height="4"/><rect x="311" y="1" width="1" height="16"/><rect x="316" y="13" width="1" height="4"/><rect x="321" y="11" width="1" height="6"/><rect x="326" y="13" width="1" height="4"/><rect x="331" y="11" width="1" height="6"/><rect x="336" y="13" width="1" height="4"/><rect x="341" y="11" width="1" height="6"/><rect x="346" y="13" width="1" height="4"/><rect x="351" y="11" width="1" height="6"/><rect x="356" y="13" width="1" height="4"/><rect x="361" y="11" width="1" height="6"/><rect x="366" y="13" width="1" height="4"/><rect x="371" y="11" width="1" height="6"/><rect x="376" y="13" width="1" height="4"/><rect x="381" y="11" width="1" height="6"/><rect x="386" y="13" width="1" height="4"/><rect x="391" y="11" width="1" height="6"/><rect x="396" y="13" width="1" height="4"/><rect x="401" y="11" width="1" height="6"/><rect x="406" y="13" width="1" height="4"/><rect x="411" y="1" width="1" height="16"/><rect x="416" y="13" width="1" height="4"/><rect x="421" y="11" width="1" height="6"/><rect x="426" y="13" width="1" height="4"/><rect x="431" y="11" width="1" height="6"/><rect x="436" y="13" width="1" height="4"/><rect x="441" y="11" width="1" height="6"/><rect x="446" y="13" width="1" height="4"/><rect x="451" y="11" width="1" height="6"/><rect x="456" y="13" width="1" height="4"/><rect x="461" y="11" width="1" height="6"/><rect x="466" y="13" width="1" height="4"/><rect x="471" y="11" width="1" height="6"/><rect x="476" y="13" width="1" height="4"/><rect x="481" y="11" width="1" height="6"/><rect x="486" y="13" width="1" height="4"/><rect x="491" y="11" width="1" height="6"/><rect x="496" y="13" width="1" height="4"/><rect x="501" y="11" width="1" height="6"/><rect x="506" y="13" width="1" height="4"/><rect x="511" y="1" width="1" height="16"/><rect x="516" y="13" width="1" height="4"/><rect x="521" y="11" width="1" height="6"/><rect x="526" y="13" width="1" height="4"/><rect x="531" y="11" width="1" height="6"/><rect x="536" y="13" width="1" height="4"/><rect x="541" y="11" width="1" height="6"/><rect x="546" y="13" width="1" height="4"/><rect x="551" y="11" width="1" height="6"/><rect x="556" y="13" width="1" height="4"/><rect x="561" y="11" width="1" height="6"/><rect x="566" y="13" width="1" height="4"/><rect x="571" y="11" width="1" height="6"/><rect x="576" y="13" width="1" height="4"/><rect x="581" y="11" width="1" height="6"/><rect x="586" y="13" width="1" height="4"/><rect x="591" y="11" width="1" height="6"/><rect x="596" y="13" width="1" height="4"/><rect x="601" y="11" width="1" height="6"/><rect x="606" y="13" width="1" height="4"/><rect x="611" y="1" width="1" height="16"/><rect x="616" y="13" width="1" height="4"/><rect x="621" y="11" width="1" height="6"/><rect x="626" y="13" width="1" height="4"/><rect x="631" y="11" width="1" height="6"/><rect x="636" y="13" width="1" height="4"/><rect x="641" y="11" width="1" height="6"/><rect x="646" y="13" width="1" height="4"/><rect x="651" y="11" width="1" height="6"/><rect x="656" y="13" width="1" height="4"/><rect x="661" y="11" width="1" height="6"/><rect x="666" y="13" width="1" height="4"/><rect x="671" y="11" width="1" height="6"/><rect x="676" y="13" width="1" height="4"/><rect x="681" y="11" width="1" height="6"/><rect x="686" y="13" width="1" height="4"/><rect x="691" y="11" width="1" height="6"/><rect x="696" y="13" width="1" height="4"/></svg>
<div class="t" style="left:253.75px;top:140px;font-size:10px;color:#111;transform-origin:0 0;transform:scaleX(0.84)">0</div>
<div class="t" style="left:344.25px;top:140px;font-size:10px;color:#111;transform-origin:0 0;transform:scaleX(0.84)">100</div>
<div class="t" style="left:444.25px;top:140px;font-size:10px;color:#111;transform-origin:0 0;transform:scaleX(0.84)">200</div>
<div class="t" style="left:544.25px;top:140px;font-size:10px;color:#111;transform-origin:0 0;transform:scaleX(0.84)">300</div>
<div class="t" style="left:644.25px;top:140px;font-size:10px;color:#111;transform-origin:0 0;transform:scaleX(0.84)">400</div>
<div class="t" style="left:744.25px;top:140px;font-size:10px;color:#111;transform-origin:0 0;transform:scaleX(0.84)">500</div>
<div class="t" style="left:844.25px;top:140px;font-size:10px;color:#111;transform-origin:0 0;transform:scaleX(0.84)">600</div>
<div class="t" style="left:944.25px;top:140px;font-size:10px;color:#111;transform-origin:0 0;transform:scaleX(0.84)">700</div>
<div style="left:229px;top:156px;width:18px;height:455px;background:#fff"></div>
<div style="left:247px;top:156px;width:1px;height:455px;background:#a8a8a8"></div>
<svg style="left:229px;top:156px" width="18" height="455" viewBox="0 0 18 455" fill="#111"><rect x="1" y="1" width="12" height="1"/><rect x="11" y="6" width="6" height="1"/><rect x="13" y="11" width="4" height="1"/><rect x="11" y="16" width="6" height="1"/><rect x="13" y="21" width="4" height="1"/><rect x="11" y="26" width="6" height="1"/><rect x="13" y="31" width="4" height="1"/><rect x="11" y="36" width="6" height="1"/><rect x="13" y="41" width="4" height="1"/><rect x="11" y="46" width="6" height="1"/><rect x="13" y="51" width="4" height="1"/><rect x="11" y="56" width="6" height="1"/><rect x="13" y="61" width="4" height="1"/><rect x="1" y="66" width="16" height="1"/><rect x="13" y="71" width="4" height="1"/><rect x="11" y="76" width="6" height="1"/><rect x="13" y="81" width="4" height="1"/><rect x="11" y="86" width="6" height="1"/><rect x="13" y="91" width="4" height="1"/><rect x="11" y="96" width="6" height="1"/><rect x="13" y="101" width="4" height="1"/><rect x="11" y="106" width="6" height="1"/><rect x="13" y="111" width="4" height="1"/><rect x="11" y="116" width="6" height="1"/><rect x="13" y="121" width="4" height="1"/><rect x="11" y="126" width="6" height="1"/><rect x="13" y="131" width="4" height="1"/><rect x="11" y="136" width="6" height="1"/><rect x="13" y="141" width="4" height="1"/><rect x="11" y="146" width="6" height="1"/><rect x="13" y="151" width="4" height="1"/><rect x="11" y="156" width="6" height="1"/><rect x="13" y="161" width="4" height="1"/><rect x="1" y="166" width="16" height="1"/><rect x="13" y="171" width="4" height="1"/><rect x="11" y="176" width="6" height="1"/><rect x="13" y="181" width="4" height="1"/><rect x="11" y="186" width="6" height="1"/><rect x="13" y="191" width="4" height="1"/><rect x="11" y="196" width="6" height="1"/><rect x="13" y="201" width="4" height="1"/><rect x="11" y="206" width="6" height="1"/><rect x="13" y="211" width="4" height="1"/><rect x="11" y="216" width="6" height="1"/><rect x="13" y="221" width="4" height="1"/><rect x="11" y="226" width="6" height="1"/><rect x="13" y="231" width="4" height="1"/><rect x="11" y="236" width="6" height="1"/><rect x="13" y="241" width="4" height="1"/><rect x="11" y="246" width="6" height="1"/><rect x="13" y="251" width="4" height="1"/><rect x="11" y="256" width="6" height="1"/><rect x="13" y="261" width="4" height="1"/><rect x="1" y="266" width="16" height="1"/><rect x="13" y="271" width="4" height="1"/><rect x="11" y="276" width="6" height="1"/><rect x="13" y="281" width="4" height="1"/><rect x="11" y="286" width="6" height="1"/><rect x="13" y="291" width="4" height="1"/><rect x="11" y="296" width="6" height="1"/><rect x="13" y="301" width="4" height="1"/><rect x="11" y="306" width="6" height="1"/><rect x="13" y="311" width="4" height="1"/><rect x="11" y="316" width="6" height="1"/><rect x="13" y="321" width="4" height="1"/><rect x="11" y="326" width="6" height="1"/><rect x="13" y="331" width="4" height="1"/><rect x="11" y="336" width="6" height="1"/><rect x="13" y="341" width="4" height="1"/><rect x="11" y="346" width="6" height="1"/><rect x="13" y="351" width="4" height="1"/><rect x="11" y="356" width="6" height="1"/><rect x="13" y="361" width="4" height="1"/><rect x="1" y="366" width="16" height="1"/><rect x="13" y="371" width="4" height="1"/><rect x="11" y="376" width="6" height="1"/><rect x="13" y="381" width="4" height="1"/><rect x="11" y="386" width="6" height="1"/><rect x="13" y="391" width="4" height="1"/><rect x="11" y="396" width="6" height="1"/><rect x="13" y="401" width="4" height="1"/><rect x="11" y="406" width="6" height="1"/><rect x="13" y="411" width="4" height="1"/><rect x="11" y="416" width="6" height="1"/><rect x="13" y="421" width="4" height="1"/><rect x="11" y="426" width="6" height="1"/><rect x="13" y="431" width="4" height="1"/><rect x="11" y="436" width="6" height="1"/><rect x="13" y="441" width="4" height="1"/><rect x="11" y="446" width="6" height="1"/><rect x="13" y="451" width="4" height="1"/></svg>
<div class="t" style="left:229px;top:207px;width:15px;height:15px;font-size:10px;color:#111;transform-origin:0 0;transform:translate(2px,15px) rotate(-90deg) scaleX(0.84)">300</div>
<div style="left:238px;top:219px;width:1px;height:3px;background:#111"></div>
<div class="t" style="left:229px;top:307px;width:15px;height:15px;font-size:10px;color:#111;transform-origin:0 0;transform:translate(2px,15px) rotate(-90deg) scaleX(0.84)">400</div>
<div style="left:238px;top:319px;width:1px;height:3px;background:#111"></div>
<div class="t" style="left:229px;top:407px;width:15px;height:15px;font-size:10px;color:#111;transform-origin:0 0;transform:translate(2px,15px) rotate(-90deg) scaleX(0.84)">500</div>
<div style="left:238px;top:419px;width:1px;height:3px;background:#111"></div>
<div class="t" style="left:229px;top:507px;width:15px;height:15px;font-size:10px;color:#111;transform-origin:0 0;transform:translate(2px,15px) rotate(-90deg) scaleX(0.84)">600</div>
<div style="left:238px;top:519px;width:1px;height:3px;background:#111"></div>
<div class="t" style="left:229px;top:607px;width:15px;height:15px;font-size:10px;color:#111;transform-origin:0 0;transform:translate(2px,15px) rotate(-90deg) scaleX(0.84)">700</div>
<div style="left:238px;top:619px;width:1px;height:3px;background:#111"></div>
<div style="left:248px;top:156px;width:699px;height:455px;background:#7b9bc3"></div>
<div style="left:248px;top:156px;width:13px;height:455px;background:#c0c0c0"></div>
<div style="left:261px;top:156px;width:2px;height:455px;background:#1a1a1a"></div>
<svg style="left:248px;top:156px" width="699" height="455" viewBox="0 0 699 455" fill="#fff"><rect x="31" y="6" width="1" height="1"/><rect x="31" y="26" width="1" height="1"/><rect x="31" y="46" width="1" height="1"/><rect x="31" y="66" width="1" height="1"/><rect x="31" y="86" width="1" height="1"/><rect x="31" y="106" width="1" height="1"/><rect x="31" y="126" width="1" height="1"/><rect x="31" y="146" width="1" height="1"/><rect x="31" y="166" width="1" height="1"/><rect x="31" y="186" width="1" height="1"/><rect x="31" y="206" width="1" height="1"/><rect x="31" y="226" width="1" height="1"/><rect x="31" y="246" width="1" height="1"/><rect x="31" y="266" width="1" height="1"/><rect x="31" y="286" width="1" height="1"/><rect x="31" y="306" width="1" height="1"/><rect x="31" y="326" width="1" height="1"/><rect x="31" y="346" width="1" height="1"/><rect x="31" y="366" width="1" height="1"/><rect x="31" y="386" width="1" height="1"/><rect x="31" y="406" width="1" height="1"/><rect x="31" y="426" width="1" height="1"/><rect x="31" y="446" width="1" height="1"/><rect x="51" y="6" width="1" height="1"/><rect x="51" y="26" width="1" height="1"/><rect x="51" y="46" width="1" height="1"/><rect x="51" y="66" width="1" height="1"/><rect x="51" y="86" width="1" height="1"/><rect x="51" y="106" width="1" height="1"/><rect x="51" y="126" width="1" height="1"/><rect x="51" y="146" width="1" height="1"/><rect x="51" y="166" width="1" height="1"/><rect x="51" y="186" width="1" height="1"/><rect x="51" y="206" width="1" height="1"/><rect x="51" y="226" width="1" height="1"/><rect x="51" y="246" width="1" height="1"/><rect x="51" y="266" width="1" height="1"/><rect x="51" y="286" width="1" height="1"/><rect x="51" y="306" width="1" height="1"/><rect x="51" y="326" width="1" height="1"/><rect x="51" y="346" width="1" height="1"/><rect x="51" y="366" width="1" height="1"/><rect x="51" y="386" width="1" height="1"/><rect x="51" y="406" width="1" height="1"/><rect x="51" y="426" width="1" height="1"/><rect x="51" y="446" width="1" height="1"/><rect x="71" y="6" width="1" height="1"/><rect x="71" y="26" width="1" height="1"/><rect x="71" y="46" width="1" height="1"/><rect x="71" y="66" width="1" height="1"/><rect x="71" y="86" width="1" height="1"/><rect x="71" y="106" width="1" height="1"/><rect x="71" y="126" width="1" height="1"/><rect x="71" y="146" width="1" height="1"/><rect x="71" y="166" width="1" height="1"/><rect x="71" y="186" width="1" height="1"/><rect x="71" y="206" width="1" height="1"/><rect x="71" y="226" width="1" height="1"/><rect x="71" y="246" width="1" height="1"/><rect x="71" y="266" width="1" height="1"/><rect x="71" y="286" width="1" height="1"/><rect x="71" y="306" width="1" height="1"/><rect x="71" y="326" width="1" height="1"/><rect x="71" y="346" width="1" height="1"/><rect x="71" y="366" width="1" height="1"/><rect x="71" y="386" width="1" height="1"/><rect x="71" y="406" width="1" height="1"/><rect x="71" y="426" width="1" height="1"/><rect x="71" y="446" width="1" height="1"/><rect x="91" y="6" width="1" height="1"/><rect x="91" y="26" width="1" height="1"/><rect x="91" y="46" width="1" height="1"/><rect x="91" y="66" width="1" height="1"/><rect x="91" y="86" width="1" height="1"/><rect x="91" y="106" width="1" height="1"/><rect x="91" y="126" width="1" height="1"/><rect x="91" y="146" width="1" height="1"/><rect x="91" y="166" width="1" height="1"/><rect x="91" y="186" width="1" height="1"/><rect x="91" y="206" width="1" height="1"/><rect x="91" y="226" width="1" height="1"/><rect x="91" y="246" width="1" height="1"/><rect x="91" y="266" width="1" height="1"/><rect x="91" y="286" width="1" height="1"/><rect x="91" y="306" width="1" height="1"/><rect x="91" y="326" width="1" height="1"/><rect x="91" y="346" width="1" height="1"/><rect x="91" y="366" width="1" height="1"/><rect x="91" y="386" width="1" height="1"/><rect x="91" y="406" width="1" height="1"/><rect x="91" y="426" width="1" height="1"/><rect x="91" y="446" width="1" height="1"/><rect x="111" y="6" width="1" height="1"/><rect x="111" y="26" width="1" height="1"/><rect x="111" y="46" width="1" height="1"/><rect x="111" y="66" width="1" height="1"/><rect x="111" y="86" width="1" height="1"/><rect x="111" y="106" width="1" height="1"/><rect x="111" y="126" width="1" height="1"/><rect x="111" y="146" width="1" height="1"/><rect x="111" y="166" width="1" height="1"/><rect x="111" y="186" width="1" height="1"/><rect x="111" y="206" width="1" height="1"/><rect x="111" y="226" width="1" height="1"/><rect x="111" y="246" width="1" height="1"/><rect x="111" y="266" width="1" height="1"/><rect x="111" y="286" width="1" height="1"/><rect x="111" y="306" width="1" height="1"/><rect x="111" y="326" width="1" height="1"/><rect x="111" y="346" width="1" height="1"/><rect x="111" y="366" width="1" height="1"/><rect x="111" y="386" width="1" height="1"/><rect x="111" y="406" width="1" height="1"/><rect x="111" y="426" width="1" height="1"/><rect x="111" y="446" width="1" height="1"/><rect x="131" y="6" width="1" height="1"/><rect x="131" y="26" width="1" height="1"/><rect x="131" y="46" width="1" height="1"/><rect x="131" y="66" width="1" height="1"/><rect x="131" y="86" width="1" height="1"/><rect x="131" y="106" width="1" height="1"/><rect x="131" y="126" width="1" height="1"/><rect x="131" y="146" width="1" height="1"/><rect x="131" y="166" width="1" height="1"/><rect x="131" y="186" width="1" height="1"/><rect x="131" y="206" width="1" height="1"/><rect x="131" y="226" width="1" height="1"/><rect x="131" y="246" width="1" height="1"/><rect x="131" y="266" width="1" height="1"/><rect x="131" y="286" width="1" height="1"/><rect x="131" y="306" width="1" height="1"/><rect x="131" y="326" width="1" height="1"/><rect x="131" y="346" width="1" height="1"/><rect x="131" y="366" width="1" height="1"/><rect x="131" y="386" width="1" height="1"/><rect x="131" y="406" width="1" height="1"/><rect x="131" y="426" width="1" height="1"/><rect x="131" y="446" width="1" height="1"/><rect x="151" y="6" width="1" height="1"/><rect x="151" y="26" width="1" height="1"/><rect x="151" y="46" width="1" height="1"/><rect x="151" y="66" width="1" height="1"/><rect x="151" y="86" width="1" height="1"/><rect x="151" y="106" width="1" height="1"/><rect x="151" y="126" width="1" height="1"/><rect x="151" y="146" width="1" height="1"/><rect x="151" y="166" width="1" height="1"/><rect x="151" y="186" width="1" height="1"/><rect x="151" y="206" width="1" height="1"/><rect x="151" y="226" width="1" height="1"/><rect x="151" y="246" width="1" height="1"/><rect x="151" y="266" width="1" height="1"/><rect x="151" y="286" width="1" height="1"/><rect x="151" y="306" width="1" height="1"/><rect x="151" y="326" width="1" height="1"/><rect x="151" y="346" width="1" height="1"/><rect x="151" y="366" width="1" height="1"/><rect x="151" y="386" width="1" height="1"/><rect x="151" y="406" width="1" height="1"/><rect x="151" y="426" width="1" height="1"/><rect x="151" y="446" width="1" height="1"/><rect x="171" y="6" width="1" height="1"/><rect x="171" y="26" width="1" height="1"/><rect x="171" y="46" width="1" height="1"/><rect x="171" y="66" width="1" height="1"/><rect x="171" y="86" width="1" height="1"/><rect x="171" y="106" width="1" height="1"/><rect x="171" y="126" width="1" height="1"/><rect x="171" y="146" width="1" height="1"/><rect x="171" y="166" width="1" height="1"/><rect x="171" y="186" width="1" height="1"/><rect x="171" y="206" width="1" height="1"/><rect x="171" y="226" width="1" height="1"/><rect x="171" y="246" width="1" height="1"/><rect x="171" y="266" width="1" height="1"/><rect x="171" y="286" width="1" height="1"/><rect x="171" y="306" width="1" height="1"/><rect x="171" y="326" width="1" height="1"/><rect x="171" y="346" width="1" height="1"/><rect x="171" y="366" width="1" height="1"/><rect x="171" y="386" width="1" height="1"/><rect x="171" y="406" width="1" height="1"/><rect x="171" y="426" width="1" height="1"/><rect x="171" y="446" width="1" height="1"/><rect x="191" y="6" width="1" height="1"/><rect x="191" y="26" width="1" height="1"/><rect x="191" y="46" width="1" height="1"/><rect x="191" y="66" width="1" height="1"/><rect x="191" y="86" width="1" height="1"/><rect x="191" y="106" width="1" height="1"/><rect x="191" y="126" width="1" height="1"/><rect x="191" y="146" width="1" height="1"/><rect x="191" y="166" width="1" height="1"/><rect x="191" y="186" width="1" height="1"/><rect x="191" y="206" width="1" height="1"/><rect x="191" y="226" width="1" height="1"/><rect x="191" y="246" width="1" height="1"/><rect x="191" y="266" width="1" height="1"/><rect x="191" y="286" width="1" height="1"/><rect x="191" y="306" width="1" height="1"/><rect x="191" y="326" width="1" height="1"/><rect x="191" y="346" width="1" height="1"/><rect x="191" y="366" width="1" height="1"/><rect x="191" y="386" width="1" height="1"/><rect x="191" y="406" width="1" height="1"/><rect x="191" y="426" width="1" height="1"/><rect x="191" y="446" width="1" height="1"/><rect x="211" y="6" width="1" height="1"/><rect x="211" y="26" width="1" height="1"/><rect x="211" y="46" width="1" height="1"/><rect x="211" y="66" width="1" height="1"/><rect x="211" y="86" width="1" height="1"/><rect x="211" y="106" width="1" height="1"/><rect x="211" y="126" width="1" height="1"/><rect x="211" y="146" width="1" height="1"/><rect x="211" y="166" width="1" height="1"/><rect x="211" y="186" width="1" height="1"/><rect x="211" y="206" width="1" height="1"/><rect x="211" y="226" width="1" height="1"/><rect x="211" y="246" width="1" height="1"/><rect x="211" y="266" width="1" height="1"/><rect x="211" y="286" width="1" height="1"/><rect x="211" y="306" width="1" height="1"/><rect x="211" y="326" width="1" height="1"/><rect x="211" y="346" width="1" height="1"/><rect x="211" y="366" width="1" height="1"/><rect x="211" y="386" width="1" height="1"/><rect x="211" y="406" width="1" height="1"/><rect x="211" y="426" width="1" height="1"/><rect x="211" y="446" width="1" height="1"/><rect x="231" y="6" width="1" height="1"/><rect x="231" y="26" width="1" height="1"/><rect x="231" y="46" width="1" height="1"/><rect x="231" y="66" width="1" height="1"/><rect x="231" y="86" width="1" height="1"/><rect x="231" y="106" width="1" height="1"/><rect x="231" y="126" width="1" height="1"/><rect x="231" y="146" width="1" height="1"/><rect x="231" y="166" width="1" height="1"/><rect x="231" y="186" width="1" height="1"/><rect x="231" y="206" width="1" height="1"/><rect x="231" y="226" width="1" height="1"/><rect x="231" y="246" width="1" height="1"/><rect x="231" y="266" width="1" height="1"/><rect x="231" y="286" width="1" height="1"/><rect x="231" y="306" width="1" height="1"/><rect x="231" y="326" width="1" height="1"/><rect x="231" y="346" width="1" height="1"/><rect x="231" y="366" width="1" height="1"/><rect x="231" y="386" width="1" height="1"/><rect x="231" y="406" width="1" height="1"/><rect x="231" y="426" width="1" height="1"/><rect x="231" y="446" width="1" height="1"/><rect x="251" y="6" width="1" height="1"/><rect x="251" y="26" width="1" height="1"/><rect x="251" y="46" width="1" height="1"/><rect x="251" y="66" width="1" height="1"/><rect x="251" y="86" width="1" height="1"/><rect x="251" y="106" width="1" height="1"/><rect x="251" y="126" width="1" height="1"/><rect x="251" y="146" width="1" height="1"/><rect x="251" y="166" width="1" height="1"/><rect x="251" y="186" width="1" height="1"/><rect x="251" y="206" width="1" height="1"/><rect x="251" y="226" width="1" height="1"/><rect x="251" y="246" width="1" height="1"/><rect x="251" y="266" width="1" height="1"/><rect x="251" y="286" width="1" height="1"/><rect x="251" y="306" width="1" height="1"/><rect x="251" y="326" width="1" height="1"/><rect x="251" y="346" width="1" height="1"/><rect x="251" y="366" width="1" height="1"/><rect x="251" y="386" width="1" height="1"/><rect x="251" y="406" width="1" height="1"/><rect x="251" y="426" width="1" height="1"/><rect x="251" y="446" width="1" height="1"/><rect x="271" y="6" width="1" height="1"/><rect x="271" y="26" width="1" height="1"/><rect x="271" y="46" width="1" height="1"/><rect x="271" y="66" width="1" height="1"/><rect x="271" y="86" width="1" height="1"/><rect x="271" y="106" width="1" height="1"/><rect x="271" y="126" width="1" height="1"/><rect x="271" y="146" width="1" height="1"/><rect x="271" y="166" width="1" height="1"/><rect x="271" y="186" width="1" height="1"/><rect x="271" y="206" width="1" height="1"/><rect x="271" y="226" width="1" height="1"/><rect x="271" y="246" width="1" height="1"/><rect x="271" y="266" width="1" height="1"/><rect x="271" y="286" width="1" height="1"/><rect x="271" y="306" width="1" height="1"/><rect x="271" y="326" width="1" height="1"/><rect x="271" y="346" width="1" height="1"/><rect x="271" y="366" width="1" height="1"/><rect x="271" y="386" width="1" height="1"/><rect x="271" y="406" width="1" height="1"/><rect x="271" y="426" width="1" height="1"/><rect x="271" y="446" width="1" height="1"/><rect x="291" y="6" width="1" height="1"/><rect x="291" y="26" width="1" height="1"/><rect x="291" y="46" width="1" height="1"/><rect x="291" y="66" width="1" height="1"/><rect x="291" y="86" width="1" height="1"/><rect x="291" y="106" width="1" height="1"/><rect x="291" y="126" width="1" height="1"/><rect x="291" y="146" width="1" height="1"/><rect x="291" y="166" width="1" height="1"/><rect x="291" y="186" width="1" height="1"/><rect x="291" y="206" width="1" height="1"/><rect x="291" y="226" width="1" height="1"/><rect x="291" y="246" width="1" height="1"/><rect x="291" y="266" width="1" height="1"/><rect x="291" y="286" width="1" height="1"/><rect x="291" y="306" width="1" height="1"/><rect x="291" y="326" width="1" height="1"/><rect x="291" y="346" width="1" height="1"/><rect x="291" y="366" width="1" height="1"/><rect x="291" y="386" width="1" height="1"/><rect x="291" y="406" width="1" height="1"/><rect x="291" y="426" width="1" height="1"/><rect x="291" y="446" width="1" height="1"/><rect x="311" y="6" width="1" height="1"/><rect x="311" y="26" width="1" height="1"/><rect x="311" y="46" width="1" height="1"/><rect x="311" y="66" width="1" height="1"/><rect x="311" y="86" width="1" height="1"/><rect x="311" y="106" width="1" height="1"/><rect x="311" y="126" width="1" height="1"/><rect x="311" y="146" width="1" height="1"/><rect x="311" y="166" width="1" height="1"/><rect x="311" y="186" width="1" height="1"/><rect x="311" y="206" width="1" height="1"/><rect x="311" y="226" width="1" height="1"/><rect x="311" y="246" width="1" height="1"/><rect x="311" y="266" width="1" height="1"/><rect x="311" y="286" width="1" height="1"/><rect x="311" y="306" width="1" height="1"/><rect x="311" y="326" width="1" height="1"/><rect x="311" y="346" width="1" height="1"/><rect x="311" y="366" width="1" height="1"/><rect x="311" y="386" width="1" height="1"/><rect x="311" y="406" width="1" height="1"/><rect x="311" y="426" width="1" height="1"/><rect x="311" y="446" width="1" height="1"/><rect x="331" y="6" width="1" height="1"/><rect x="331" y="26" width="1" height="1"/><rect x="331" y="46" width="1" height="1"/><rect x="331" y="66" width="1" height="1"/><rect x="331" y="86" width="1" height="1"/><rect x="331" y="106" width="1" height="1"/><rect x="331" y="126" width="1" height="1"/><rect x="331" y="146" width="1" height="1"/><rect x="331" y="166" width="1" height="1"/><rect x="331" y="186" width="1" height="1"/><rect x="331" y="206" width="1" height="1"/><rect x="331" y="226" width="1" height="1"/><rect x="331" y="246" width="1" height="1"/><rect x="331" y="266" width="1" height="1"/><rect x="331" y="286" width="1" height="1"/><rect x="331" y="306" width="1" height="1"/><rect x="331" y="326" width="1" height="1"/><rect x="331" y="346" width="1" height="1"/><rect x="331" y="366" width="1" height="1"/><rect x="331" y="386" width="1" height="1"/><rect x="331" y="406" width="1" height="1"/><rect x="331" y="426" width="1" height="1"/><rect x="331" y="446" width="1" height="1"/><rect x="351" y="6" width="1" height="1"/><rect x="351" y="26" width="1" height="1"/><rect x="351" y="46" width="1" height="1"/><rect x="351" y="66" width="1" height="1"/><rect x="351" y="86" width="1" height="1"/><rect x="351" y="106" width="1" height="1"/><rect x="351" y="126" width="1" height="1"/><rect x="351" y="146" width="1" height="1"/><rect x="351" y="166" width="1" height="1"/><rect x="351" y="186" width="1" height="1"/><rect x="351" y="206" width="1" height="1"/><rect x="351" y="226" width="1" height="1"/><rect x="351" y="246" width="1" height="1"/><rect x="351" y="266" width="1" height="1"/><rect x="351" y="286" width="1" height="1"/><rect x="351" y="306" width="1" height="1"/><rect x="351" y="326" width="1" height="1"/><rect x="351" y="346" width="1" height="1"/><rect x="351" y="366" width="1" height="1"/><rect x="351" y="386" width="1" height="1"/><rect x="351" y="406" width="1" height="1"/><rect x="351" y="426" width="1" height="1"/><rect x="351" y="446" width="1" height="1"/><rect x="371" y="6" width="1" height="1"/><rect x="371" y="26" width="1" height="1"/><rect x="371" y="46" width="1" height="1"/><rect x="371" y="66" width="1" height="1"/><rect x="371" y="86" width="1" height="1"/><rect x="371" y="106" width="1" height="1"/><rect x="371" y="126" width="1" height="1"/><rect x="371" y="146" width="1" height="1"/><rect x="371" y="166" width="1" height="1"/><rect x="371" y="186" width="1" height="1"/><rect x="371" y="206" width="1" height="1"/><rect x="371" y="226" width="1" height="1"/><rect x="371" y="246" width="1" height="1"/><rect x="371" y="266" width="1" height="1"/><rect x="371" y="286" width="1" height="1"/><rect x="371" y="306" width="1" height="1"/><rect x="371" y="326" width="1" height="1"/><rect x="371" y="346" width="1" height="1"/><rect x="371" y="366" width="1" height="1"/><rect x="371" y="386" width="1" height="1"/><rect x="371" y="406" width="1" height="1"/><rect x="371" y="426" width="1" height="1"/><rect x="371" y="446" width="1" height="1"/><rect x="391" y="6" width="1" height="1"/><rect x="391" y="26" width="1" height="1"/><rect x="391" y="46" width="1" height="1"/><rect x="391" y="66" width="1" height="1"/><rect x="391" y="86" width="1" height="1"/><rect x="391" y="106" width="1" height="1"/><rect x="391" y="126" width="1" height="1"/><rect x="391" y="146" width="1" height="1"/><rect x="391" y="166" width="1" height="1"/><rect x="391" y="186" width="1" height="1"/><rect x="391" y="206" width="1" height="1"/><rect x="391" y="226" width="1" height="1"/><rect x="391" y="246" width="1" height="1"/><rect x="391" y="266" width="1" height="1"/><rect x="391" y="286" width="1" height="1"/><rect x="391" y="306" width="1" height="1"/><rect x="391" y="326" width="1" height="1"/><rect x="391" y="346" width="1" height="1"/><rect x="391" y="366" width="1" height="1"/><rect x="391" y="386" width="1" height="1"/><rect x="391" y="406" width="1" height="1"/><rect x="391" y="426" width="1" height="1"/><rect x="391" y="446" width="1" height="1"/><rect x="411" y="6" width="1" height="1"/><rect x="411" y="26" width="1" height="1"/><rect x="411" y="46" width="1" height="1"/><rect x="411" y="66" width="1" height="1"/><rect x="411" y="86" width="1" height="1"/><rect x="411" y="106" width="1" height="1"/><rect x="411" y="126" width="1" height="1"/><rect x="411" y="146" width="1" height="1"/><rect x="411" y="166" width="1" height="1"/><rect x="411" y="186" width="1" height="1"/><rect x="411" y="206" width="1" height="1"/><rect x="411" y="226" width="1" height="1"/><rect x="411" y="246" width="1" height="1"/><rect x="411" y="266" width="1" height="1"/><rect x="411" y="286" width="1" height="1"/><rect x="411" y="306" width="1" height="1"/><rect x="411" y="326" width="1" height="1"/><rect x="411" y="346" width="1" height="1"/><rect x="411" y="366" width="1" height="1"/><rect x="411" y="386" width="1" height="1"/><rect x="411" y="406" width="1" height="1"/><rect x="411" y="426" width="1" height="1"/><rect x="411" y="446" width="1" height="1"/><rect x="431" y="6" width="1" height="1"/><rect x="431" y="26" width="1" height="1"/><rect x="431" y="46" width="1" height="1"/><rect x="431" y="66" width="1" height="1"/><rect x="431" y="86" width="1" height="1"/><rect x="431" y="106" width="1" height="1"/><rect x="431" y="126" width="1" height="1"/><rect x="431" y="146" width="1" height="1"/><rect x="431" y="166" width="1" height="1"/><rect x="431" y="186" width="1" height="1"/><rect x="431" y="206" width="1" height="1"/><rect x="431" y="226" width="1" height="1"/><rect x="431" y="246" width="1" height="1"/><rect x="431" y="266" width="1" height="1"/><rect x="431" y="286" width="1" height="1"/><rect x="431" y="306" width="1" height="1"/><rect x="431" y="326" width="1" height="1"/><rect x="431" y="346" width="1" height="1"/><rect x="431" y="366" width="1" height="1"/><rect x="431" y="386" width="1" height="1"/><rect x="431" y="406" width="1" height="1"/><rect x="431" y="426" width="1" height="1"/><rect x="431" y="446" width="1" height="1"/><rect x="451" y="6" width="1" height="1"/><rect x="451" y="26" width="1" height="1"/><rect x="451" y="46" width="1" height="1"/><rect x="451" y="66" width="1" height="1"/><rect x="451" y="86" width="1" height="1"/><rect x="451" y="106" width="1" height="1"/><rect x="451" y="126" width="1" height="1"/><rect x="451" y="146" width="1" height="1"/><rect x="451" y="166" width="1" height="1"/><rect x="451" y="186" width="1" height="1"/><rect x="451" y="206" width="1" height="1"/><rect x="451" y="226" width="1" height="1"/><rect x="451" y="246" width="1" height="1"/><rect x="451" y="266" width="1" height="1"/><rect x="451" y="286" width="1" height="1"/><rect x="451" y="306" width="1" height="1"/><rect x="451" y="326" width="1" height="1"/><rect x="451" y="346" width="1" height="1"/><rect x="451" y="366" width="1" height="1"/><rect x="451" y="386" width="1" height="1"/><rect x="451" y="406" width="1" height="1"/><rect x="451" y="426" width="1" height="1"/><rect x="451" y="446" width="1" height="1"/><rect x="471" y="6" width="1" height="1"/><rect x="471" y="26" width="1" height="1"/><rect x="471" y="46" width="1" height="1"/><rect x="471" y="66" width="1" height="1"/><rect x="471" y="86" width="1" height="1"/><rect x="471" y="106" width="1" height="1"/><rect x="471" y="126" width="1" height="1"/><rect x="471" y="146" width="1" height="1"/><rect x="471" y="166" width="1" height="1"/><rect x="471" y="186" width="1" height="1"/><rect x="471" y="206" width="1" height="1"/><rect x="471" y="226" width="1" height="1"/><rect x="471" y="246" width="1" height="1"/><rect x="471" y="266" width="1" height="1"/><rect x="471" y="286" width="1" height="1"/><rect x="471" y="306" width="1" height="1"/><rect x="471" y="326" width="1" height="1"/><rect x="471" y="346" width="1" height="1"/><rect x="471" y="366" width="1" height="1"/><rect x="471" y="386" width="1" height="1"/><rect x="471" y="406" width="1" height="1"/><rect x="471" y="426" width="1" height="1"/><rect x="471" y="446" width="1" height="1"/><rect x="491" y="6" width="1" height="1"/><rect x="491" y="26" width="1" height="1"/><rect x="491" y="46" width="1" height="1"/><rect x="491" y="66" width="1" height="1"/><rect x="491" y="86" width="1" height="1"/><rect x="491" y="106" width="1" height="1"/><rect x="491" y="126" width="1" height="1"/><rect x="491" y="146" width="1" height="1"/><rect x="491" y="166" width="1" height="1"/><rect x="491" y="186" width="1" height="1"/><rect x="491" y="206" width="1" height="1"/><rect x="491" y="226" width="1" height="1"/><rect x="491" y="246" width="1" height="1"/><rect x="491" y="266" width="1" height="1"/><rect x="491" y="286" width="1" height="1"/><rect x="491" y="306" width="1" height="1"/><rect x="491" y="326" width="1" height="1"/><rect x="491" y="346" width="1" height="1"/><rect x="491" y="366" width="1" height="1"/><rect x="491" y="386" width="1" height="1"/><rect x="491" y="406" width="1" height="1"/><rect x="491" y="426" width="1" height="1"/><rect x="491" y="446" width="1" height="1"/><rect x="511" y="6" width="1" height="1"/><rect x="511" y="26" width="1" height="1"/><rect x="511" y="46" width="1" height="1"/><rect x="511" y="66" width="1" height="1"/><rect x="511" y="86" width="1" height="1"/><rect x="511" y="106" width="1" height="1"/><rect x="511" y="126" width="1" height="1"/><rect x="511" y="146" width="1" height="1"/><rect x="511" y="166" width="1" height="1"/><rect x="511" y="186" width="1" height="1"/><rect x="511" y="206" width="1" height="1"/><rect x="511" y="226" width="1" height="1"/><rect x="511" y="246" width="1" height="1"/><rect x="511" y="266" width="1" height="1"/><rect x="511" y="286" width="1" height="1"/><rect x="511" y="306" width="1" height="1"/><rect x="511" y="326" width="1" height="1"/><rect x="511" y="346" width="1" height="1"/><rect x="511" y="366" width="1" height="1"/><rect x="511" y="386" width="1" height="1"/><rect x="511" y="406" width="1" height="1"/><rect x="511" y="426" width="1" height="1"/><rect x="511" y="446" width="1" height="1"/><rect x="531" y="6" width="1" height="1"/><rect x="531" y="26" width="1" height="1"/><rect x="531" y="46" width="1" height="1"/><rect x="531" y="66" width="1" height="1"/><rect x="531" y="86" width="1" height="1"/><rect x="531" y="106" width="1" height="1"/><rect x="531" y="126" width="1" height="1"/><rect x="531" y="146" width="1" height="1"/><rect x="531" y="166" width="1" height="1"/><rect x="531" y="186" width="1" height="1"/><rect x="531" y="206" width="1" height="1"/><rect x="531" y="226" width="1" height="1"/><rect x="531" y="246" width="1" height="1"/><rect x="531" y="266" width="1" height="1"/><rect x="531" y="286" width="1" height="1"/><rect x="531" y="306" width="1" height="1"/><rect x="531" y="326" width="1" height="1"/><rect x="531" y="346" width="1" height="1"/><rect x="531" y="366" width="1" height="1"/><rect x="531" y="386" width="1" height="1"/><rect x="531" y="406" width="1" height="1"/><rect x="531" y="426" width="1" height="1"/><rect x="531" y="446" width="1" height="1"/><rect x="551" y="6" width="1" height="1"/><rect x="551" y="26" width="1" height="1"/><rect x="551" y="46" width="1" height="1"/><rect x="551" y="66" width="1" height="1"/><rect x="551" y="86" width="1" height="1"/><rect x="551" y="106" width="1" height="1"/><rect x="551" y="126" width="1" height="1"/><rect x="551" y="146" width="1" height="1"/><rect x="551" y="166" width="1" height="1"/><rect x="551" y="186" width="1" height="1"/><rect x="551" y="206" width="1" height="1"/><rect x="551" y="226" width="1" height="1"/><rect x="551" y="246" width="1" height="1"/><rect x="551" y="266" width="1" height="1"/><rect x="551" y="286" width="1" height="1"/><rect x="551" y="306" width="1" height="1"/><rect x="551" y="326" width="1" height="1"/><rect x="551" y="346" width="1" height="1"/><rect x="551" y="366" width="1" height="1"/><rect x="551" y="386" width="1" height="1"/><rect x="551" y="406" width="1" height="1"/><rect x="551" y="426" width="1" height="1"/><rect x="551" y="446" width="1" height="1"/><rect x="571" y="6" width="1" height="1"/><rect x="571" y="26" width="1" height="1"/><rect x="571" y="46" width="1" height="1"/><rect x="571" y="66" width="1" height="1"/><rect x="571" y="86" width="1" height="1"/><rect x="571" y="106" width="1" height="1"/><rect x="571" y="126" width="1" height="1"/><rect x="571" y="146" width="1" height="1"/><rect x="571" y="166" width="1" height="1"/><rect x="571" y="186" width="1" height="1"/><rect x="571" y="206" width="1" height="1"/><rect x="571" y="226" width="1" height="1"/><rect x="571" y="246" width="1" height="1"/><rect x="571" y="266" width="1" height="1"/><rect x="571" y="286" width="1" height="1"/><rect x="571" y="306" width="1" height="1"/><rect x="571" y="326" width="1" height="1"/><rect x="571" y="346" width="1" height="1"/><rect x="571" y="366" width="1" height="1"/><rect x="571" y="386" width="1" height="1"/><rect x="571" y="406" width="1" height="1"/><rect x="571" y="426" width="1" height="1"/><rect x="571" y="446" width="1" height="1"/><rect x="591" y="6" width="1" height="1"/><rect x="591" y="26" width="1" height="1"/><rect x="591" y="46" width="1" height="1"/><rect x="591" y="66" width="1" height="1"/><rect x="591" y="86" width="1" height="1"/><rect x="591" y="106" width="1" height="1"/><rect x="591" y="126" width="1" height="1"/><rect x="591" y="146" width="1" height="1"/><rect x="591" y="166" width="1" height="1"/><rect x="591" y="186" width="1" height="1"/><rect x="591" y="206" width="1" height="1"/><rect x="591" y="226" width="1" height="1"/><rect x="591" y="246" width="1" height="1"/><rect x="591" y="266" width="1" height="1"/><rect x="591" y="286" width="1" height="1"/><rect x="591" y="306" width="1" height="1"/><rect x="591" y="326" width="1" height="1"/><rect x="591" y="346" width="1" height="1"/><rect x="591" y="366" width="1" height="1"/><rect x="591" y="386" width="1" height="1"/><rect x="591" y="406" width="1" height="1"/><rect x="591" y="426" width="1" height="1"/><rect x="591" y="446" width="1" height="1"/><rect x="611" y="6" width="1" height="1"/><rect x="611" y="26" width="1" height="1"/><rect x="611" y="46" width="1" height="1"/><rect x="611" y="66" width="1" height="1"/><rect x="611" y="86" width="1" height="1"/><rect x="611" y="106" width="1" height="1"/><rect x="611" y="126" width="1" height="1"/><rect x="611" y="146" width="1" height="1"/><rect x="611" y="166" width="1" height="1"/><rect x="611" y="186" width="1" height="1"/><rect x="611" y="206" width="1" height="1"/><rect x="611" y="226" width="1" height="1"/><rect x="611" y="246" width="1" height="1"/><rect x="611" y="266" width="1" height="1"/><rect x="611" y="286" width="1" height="1"/><rect x="611" y="306" width="1" height="1"/><rect x="611" y="326" width="1" height="1"/><rect x="611" y="346" width="1" height="1"/><rect x="611" y="366" width="1" height="1"/><rect x="611" y="386" width="1" height="1"/><rect x="611" y="406" width="1" height="1"/><rect x="611" y="426" width="1" height="1"/><rect x="611" y="446" width="1" height="1"/><rect x="631" y="6" width="1" height="1"/><rect x="631" y="26" width="1" height="1"/><rect x="631" y="46" width="1" height="1"/><rect x="631" y="66" width="1" height="1"/><rect x="631" y="86" width="1" height="1"/><rect x="631" y="106" width="1" height="1"/><rect x="631" y="126" width="1" height="1"/><rect x="631" y="146" width="1" height="1"/><rect x="631" y="166" width="1" height="1"/><rect x="631" y="186" width="1" height="1"/><rect x="631" y="206" width="1" height="1"/><rect x="631" y="226" width="1" height="1"/><rect x="631" y="246" width="1" height="1"/><rect x="631" y="266" width="1" height="1"/><rect x="631" y="286" width="1" height="1"/><rect x="631" y="306" width="1" height="1"/><rect x="631" y="326" width="1" height="1"/><rect x="631" y="346" width="1" height="1"/><rect x="631" y="366" width="1" height="1"/><rect x="631" y="386" width="1" height="1"/><rect x="631" y="406" width="1" height="1"/><rect x="631" y="426" width="1" height="1"/><rect x="631" y="446" width="1" height="1"/><rect x="651" y="6" width="1" height="1"/><rect x="651" y="26" width="1" height="1"/><rect x="651" y="46" width="1" height="1"/><rect x="651" y="66" width="1" height="1"/><rect x="651" y="86" width="1" height="1"/><rect x="651" y="106" width="1" height="1"/><rect x="651" y="126" width="1" height="1"/><rect x="651" y="146" width="1" height="1"/><rect x="651" y="166" width="1" height="1"/><rect x="651" y="186" width="1" height="1"/><rect x="651" y="206" width="1" height="1"/><rect x="651" y="226" width="1" height="1"/><rect x="651" y="246" width="1" height="1"/><rect x="651" y="266" width="1" height="1"/><rect x="651" y="286" width="1" height="1"/><rect x="651" y="306" width="1" height="1"/><rect x="651" y="326" width="1" height="1"/><rect x="651" y="346" width="1" height="1"/><rect x="651" y="366" width="1" height="1"/><rect x="651" y="386" width="1" height="1"/><rect x="651" y="406" width="1" height="1"/><rect x="651" y="426" width="1" height="1"/><rect x="651" y="446" width="1" height="1"/><rect x="671" y="6" width="1" height="1"/><rect x="671" y="26" width="1" height="1"/><rect x="671" y="46" width="1" height="1"/><rect x="671" y="66" width="1" height="1"/><rect x="671" y="86" width="1" height="1"/><rect x="671" y="106" width="1" height="1"/><rect x="671" y="126" width="1" height="1"/><rect x="671" y="146" width="1" height="1"/><rect x="671" y="166" width="1" height="1"/><rect x="671" y="186" width="1" height="1"/><rect x="671" y="206" width="1" height="1"/><rect x="671" y="226" width="1" height="1"/><rect x="671" y="246" width="1" height="1"/><rect x="671" y="266" width="1" height="1"/><rect x="671" y="286" width="1" height="1"/><rect x="671" y="306" width="1" height="1"/><rect x="671" y="326" width="1" height="1"/><rect x="671" y="346" width="1" height="1"/><rect x="671" y="366" width="1" height="1"/><rect x="671" y="386" width="1" height="1"/><rect x="671" y="406" width="1" height="1"/><rect x="671" y="426" width="1" height="1"/><rect x="671" y="446" width="1" height="1"/><rect x="691" y="6" width="1" height="1"/><rect x="691" y="26" width="1" height="1"/><rect x="691" y="46" width="1" height="1"/><rect x="691" y="66" width="1" height="1"/><rect x="691" y="86" width="1" height="1"/><rect x="691" y="106" width="1" height="1"/><rect x="691" y="126" width="1" height="1"/><rect x="691" y="146" width="1" height="1"/><rect x="691" y="166" width="1" height="1"/><rect x="691" y="186" width="1" height="1"/><rect x="691" y="206" width="1" height="1"/><rect x="691" y="226" width="1" height="1"/><rect x="691" y="246" width="1" height="1"/><rect x="691" y="266" width="1" height="1"/><rect x="691" y="286" width="1" height="1"/><rect x="691" y="306" width="1" height="1"/><rect x="691" y="326" width="1" height="1"/><rect x="691" y="346" width="1" height="1"/><rect x="691" y="366" width="1" height="1"/><rect x="691" y="386" width="1" height="1"/><rect x="691" y="406" width="1" height="1"/><rect x="691" y="426" width="1" height="1"/><rect x="691" y="446" width="1" height="1"/></svg>
<div style="left:415px;top:156px;width:532px;height:413px;background:#efefef;border-left:3px solid #0a0a0a;border-bottom:3px solid #0a0a0a"></div>
<div style="left:0;top:0;width:947px;height:611px;clip-path:inset(156px 0 0 248px)">
<svg style="left:0;top:0;position:absolute" width="0" height="0"><defs>
<filter id="noise" x="0" y="0" width="100%" height="100%"><feTurbulence type="fractalNoise" baseFrequency="2.5" numOctaves="1" seed="3" result="t"/><feColorMatrix in="t" values="3 0.6 0 0 -1.3  0.6 3 0 0 -1.3  0 0.6 3 0 -1.3  0 0 0 0 0.14" result="n"/><feComposite in="n" in2="SourceGraphic" operator="in" result="nc"/><feMerge><feMergeNode in="SourceGraphic"/><feMergeNode in="nc"/></feMerge></filter>
<filter id="noise2" x="0" y="0" width="100%" height="100%"><feTurbulence type="fractalNoise" baseFrequency="2.5" numOctaves="1" seed="7" result="t"/><feColorMatrix in="t" values="3 0 0 0 -1.2  3 0 0 0 -1  3 0 0 0 -0.6  0 0 0 0 0.07" result="n"/><feComposite in="n" in2="SourceGraphic" operator="in" result="nc"/><feMerge><feMergeNode in="SourceGraphic"/><feMergeNode in="nc"/></feMerge></filter>
<filter id="noise3" x="0" y="0" width="100%" height="100%"><feTurbulence type="fractalNoise" baseFrequency="2.5" numOctaves="1" seed="11" result="t"/><feColorMatrix in="t" values="0 0 0 0 0.1  0 0 0 0 0  0 0 0 0 0  0 -0.9 0 0 0.5" result="n"/><feComposite in="n" in2="SourceGraphic" operator="in" result="nc"/><feMerge><feMergeNode in="SourceGraphic"/><feMergeNode in="nc"/></feMerge></filter>
<pattern id="hg" width="2" height="2" patternUnits="userSpaceOnUse"><rect width="2" height="2" fill="#cfe8cf"/><rect width="1" height="1" fill="#1e9a3a"/><rect x="1" y="1" width="1" height="1" fill="#1e9a3a"/></pattern>
<pattern id="hr" width="2" height="2" patternUnits="userSpaceOnUse"><rect width="2" height="2" fill="#f4d6d6"/><rect width="1" height="1" fill="#d03030"/><rect x="1" y="1" width="1" height="1" fill="#d03030"/></pattern>
<linearGradient id="gbtn" x1="0" y1="0" x2="0" y2="1"><stop offset="0" stop-color="#9ad49a"/><stop offset="0.25" stop-color="#4fae4f"/><stop offset="0.45" stop-color="#0b8a0b"/><stop offset="0.55" stop-color="#0d8d0d"/><stop offset="0.8" stop-color="#6fc06f"/><stop offset="1" stop-color="#a8daa8"/></linearGradient>
<radialGradient id="rbtn" cx="0.4" cy="0.35" r="0.7"><stop offset="0" stop-color="#e03030"/><stop offset="1" stop-color="#900000"/></radialGradient>
</defs></svg>
<div style="left:422px;top:140px;width:430px;height:96px;border:3px solid #3ba871"></div>
<div style="left:423px;top:245px;width:428px;height:191px;border:3px solid #3ba871"></div>
<div style="left:426px;top:440px;width:422px;height:108px;border:2px solid #52c452"></div>
<div style="left:867px;top:441px;width:100px;height:107px;border:2px solid #52c452"></div>
<div style="left:866px;top:140px;width:100px;height:294px;border:3px solid #f2a862"></div>
<svg style="left:465px;top:167px" width="120" height="39" viewBox="0 0 120 39">
<defs><linearGradient id="bt465" x1="0" y1="0" x2="0" y2="1"><stop offset="0" stop-color="#3f5c5c"/><stop offset="1" stop-color="#9fd6d6"/></linearGradient>
<linearGradient id="bl465" x1="0" y1="0" x2="1" y2="0"><stop offset="0" stop-color="#4f6e6e"/><stop offset="1" stop-color="#a8dede"/></linearGradient>
<linearGradient id="bb465" x1="0" y1="0" x2="0" y2="1"><stop offset="0" stop-color="#5a8080"/><stop offset="1" stop-color="#d4ffff"/></linearGradient>
<linearGradient id="br465" x1="0" y1="0" x2="1" y2="0"><stop offset="0" stop-color="#5a8080"/><stop offset="1" stop-color="#d4ffff"/></linearGradient></defs>
<rect width="120" height="39" fill="#eef2f2"/>
<path d="M0 0 H120 L114 6 H6 Z" fill="url(#bt465)"/>
<path d="M0 0 L6 6 V33 L0 39 Z" fill="url(#bl465)"/>
<path d="M0 39 L6 33 H114 L120 39 Z" fill="url(#bb465)"/>
<path d="M120 0 V39 L114 33 V6 Z" fill="url(#br465)"/>
</svg>
<div class="t" style="left:469px;top:171px;font-size:26px;font-family:'Liberation Mono',monospace;color:#000;transform-origin:0 0;transform:scale(1.02,1.33);text-shadow:-1.2px 0 0 #f8c890">####.##</div>
<svg style="left:627px;top:167px" width="60" height="39" viewBox="0 0 60 39">
<defs><linearGradient id="bt627" x1="0" y1="0" x2="0" y2="1"><stop offset="0" stop-color="#3f5c5c"/><stop offset="1" stop-color="#9fd6d6"/></linearGradient>
<linearGradient id="bl627" x1="0" y1="0" x2="1" y2="0"><stop offset="0" stop-color="#4f6e6e"/><stop offset="1" stop-color="#a8dede"/></linearGradient>
<linearGradient id="bb627" x1="0" y1="0" x2="0" y2="1"><stop offset="0" stop-color="#5a8080"/><stop offset="1" stop-color="#d4ffff"/></linearGradient>
<linearGradient id="br627" x1="0" y1="0" x2="1" y2="0"><stop offset="0" stop-color="#5a8080"/><stop offset="1" stop-color="#d4ffff"/></linearGradient></defs>
<rect width="60" height="39" fill="#eef2f2"/>
<path d="M0 0 H60 L54 6 H6 Z" fill="url(#bt627)"/>
<path d="M0 0 L6 6 V33 L0 39 Z" fill="url(#bl627)"/>
<path d="M0 39 L6 33 H54 L60 39 Z" fill="url(#bb627)"/>
<path d="M60 0 V39 L54 33 V6 Z" fill="url(#br627)"/>
</svg>
<div class="t" style="left:631px;top:171px;font-size:26px;font-family:'Liberation Mono',monospace;color:#000;transform-origin:0 0;transform:scale(1.02,1.33);text-shadow:-1.2px 0 0 #f8c890">###</div>
<svg style="left:733px;top:166px" width="60" height="39" viewBox="0 0 60 39">
<defs><linearGradient id="bt733" x1="0" y1="0" x2="0" y2="1"><stop offset="0" stop-color="#3f5c5c"/><stop offset="1" stop-color="#9fd6d6"/></linearGradient>
<linearGradient id="bl733" x1="0" y1="0" x2="1" y2="0"><stop offset="0" stop-color="#4f6e6e"/><stop offset="1" stop-color="#a8dede"/></linearGradient>
<linearGradient id="bb733" x1="0" y1="0" x2="0" y2="1"><stop offset="0" stop-color="#5a8080"/><stop offset="1" stop-color="#d4ffff"/></linearGradient>
<linearGradient id="br733" x1="0" y1="0" x2="1" y2="0"><stop offset="0" stop-color="#5a8080"/><stop offset="1" stop-color="#d4ffff"/></linearGradient></defs>
<rect width="60" height="39" fill="#eef2f2"/>
<path d="M0 0 H60 L54 6 H6 Z" fill="url(#bt733)"/>
<path d="M0 0 L6 6 V33 L0 39 Z" fill="url(#bl733)"/>
<path d="M0 39 L6 33 H54 L60 39 Z" fill="url(#bb733)"/>
<path d="M60 0 V39 L54 33 V6 Z" fill="url(#br733)"/>
</svg>
<div class="t" style="left:737px;top:170px;font-size:26px;font-family:'Liberation Mono',monospace;color:#000;transform-origin:0 0;transform:scale(1.02,1.33);text-shadow:-1.2px 0 0 #f8c890">###</div>
<svg style="left:537px;top:261px" width="300" height="24" viewBox="0 0 300 24"><rect x="0" y="0" width="148" height="23" fill="url(#hg)"/><rect x="0" y="23" width="300" height="1" fill="#555"/><rect x="299" y="0" width="1" height="24" fill="#555"/></svg>
<svg style="left:537px;top:285px" width="300" height="24" viewBox="0 0 300 24"><rect x="0" y="0" width="149" height="23" fill="#000088"/><rect x="0" y="23" width="300" height="1" fill="#555"/><rect x="299" y="0" width="1" height="24" fill="#555"/></svg>
<svg style="left:537px;top:310px" width="300" height="24" viewBox="0 0 300 24"><rect x="0" y="0" width="148" height="23" fill="url(#hr)"/><rect x="0" y="23" width="300" height="1" fill="#555"/><rect x="299" y="0" width="1" height="24" fill="#555"/></svg>
<svg style="left:537px;top:361px" width="300" height="24" viewBox="0 0 300 24"><rect x="0" y="0" width="149" height="23" fill="#000088"/><rect x="0" y="23" width="300" height="1" fill="#555"/><rect x="299" y="0" width="1" height="24" fill="#555"/></svg>
<svg style="left:537px;top:386px" width="300" height="24" viewBox="0 0 300 24"><rect x="0" y="0" width="148" height="23" fill="url(#hr)"/><rect x="0" y="23" width="300" height="1" fill="#555"/><rect x="299" y="0" width="1" height="24" fill="#555"/></svg>
<svg style="left:443px;top:275px" width="70" height="52" viewBox="0 0 70 52">
<defs><linearGradient id="rf445276" x1="0" y1="0" x2="0" y2="1"><stop offset="0" stop-color="#b8d8ee"/><stop offset="1" stop-color="#eef4f8"/></linearGradient>
<linearGradient id="gl445276" x1="0" y1="0" x2="0" y2="1"><stop offset="0" stop-color="#fff" stop-opacity="0.6"/><stop offset="1" stop-color="#fff" stop-opacity="0.25"/></linearGradient>
<linearGradient id="gb445276" x1="0" y1="0" x2="0" y2="1"><stop offset="0" stop-color="#0a8a0a"/><stop offset="0.5" stop-color="#088508"/><stop offset="0.78" stop-color="#58b258"/><stop offset="1" stop-color="#b4e0b4"/></linearGradient></defs>
<rect x="3" y="45" width="63" height="5" fill="url(#rf445276)"/>
<rect x="3" y="2" width="65" height="44" rx="3" fill="#1e3a1e" opacity="0.6"/>
<rect x="2" y="1" width="65" height="44" rx="3" fill="url(#gb445276)"/>
<path d="M2 4 Q2 1 5 1 L64 1 Q67 1 67 4 L67 24.200000000000003 Q29.25 22.0 2 11.0 Z" fill="url(#gl445276)"/>
<rect x="2.5" y="1.5" width="64" height="43" rx="3" fill="none" stroke="#d8f0d8" stroke-width="0.8" opacity="0.6"/>
</svg>
<svg style="left:443px;top:364px" width="70" height="53" viewBox="0 0 70 53">
<defs><linearGradient id="rf445365" x1="0" y1="0" x2="0" y2="1"><stop offset="0" stop-color="#b8d8ee"/><stop offset="1" stop-color="#eef4f8"/></linearGradient>
<linearGradient id="gl445365" x1="0" y1="0" x2="0" y2="1"><stop offset="0" stop-color="#fff" stop-opacity="0.6"/><stop offset="1" stop-color="#fff" stop-opacity="0.25"/></linearGradient>
<linearGradient id="gb445365" x1="0" y1="0" x2="0" y2="1"><stop offset="0" stop-color="#0a8a0a"/><stop offset="0.5" stop-color="#088508"/><stop offset="0.78" stop-color="#58b258"/><stop offset="1" stop-color="#b4e0b4"/></linearGradient></defs>
<rect x="3" y="46" width="63" height="5" fill="url(#rf445365)"/>
<rect x="3" y="2" width="65" height="45" rx="3" fill="#1e3a1e" opacity="0.6"/>
<rect x="2" y="1" width="65" height="45" rx="3" fill="url(#gb445365)"/>
<path d="M2 4 Q2 1 5 1 L64 1 Q67 1 67 4 L67 24.750000000000004 Q29.25 22.5 2 11.25 Z" fill="url(#gl445365)"/>
<rect x="2.5" y="1.5" width="64" height="44" rx="3" fill="none" stroke="#d8f0d8" stroke-width="0.8" opacity="0.6"/>
</svg>
<svg style="left:525px;top:477px" width="138" height="48" viewBox="0 0 138 48">
<defs><linearGradient id="rf527478" x1="0" y1="0" x2="0" y2="1"><stop offset="0" stop-color="#b8d8ee"/><stop offset="1" stop-color="#eef4f8"/></linearGradient>
<linearGradient id="gl527478" x1="0" y1="0" x2="0" y2="1"><stop offset="0" stop-color="#fff" stop-opacity="0.6"/><stop offset="1" stop-color="#fff" stop-opacity="0.25"/></linearGradient>
<linearGradient id="gb527478" x1="0" y1="0" x2="0" y2="1"><stop offset="0" stop-color="#0a8a0a"/><stop offset="0.5" stop-color="#088508"/><stop offset="0.78" stop-color="#58b258"/><stop offset="1" stop-color="#b4e0b4"/></linearGradient></defs>
<rect x="3" y="41" width="131" height="5" fill="url(#rf527478)"/>
<rect x="3" y="2" width="133" height="40" rx="3" fill="#1e3a1e" opacity="0.6"/>
<rect x="2" y="1" width="133" height="40" rx="3" fill="url(#gb527478)"/>
<path d="M2 4 Q2 1 5 1 L132 1 Q135 1 135 4 L135 22.0 Q59.85 20.0 2 10.0 Z" fill="url(#gl527478)"/>
<rect x="2.5" y="1.5" width="132" height="39" rx="3" fill="none" stroke="#d8f0d8" stroke-width="0.8" opacity="0.6"/>
</svg>
<svg style="left:921px;top:470px" width="65" height="57" viewBox="0 0 65 57">
<defs><linearGradient id="rf923471" x1="0" y1="0" x2="0" y2="1"><stop offset="0" stop-color="#b8d8ee"/><stop offset="1" stop-color="#eef4f8"/></linearGradient>
<linearGradient id="gl923471" x1="0" y1="0" x2="0" y2="1"><stop offset="0" stop-color="#fff" stop-opacity="0.6"/><stop offset="1" stop-color="#fff" stop-opacity="0.25"/></linearGradient>
<linearGradient id="gb923471" x1="0" y1="0" x2="0" y2="1"><stop offset="0" stop-color="#0a8a0a"/><stop offset="0.5" stop-color="#088508"/><stop offset="0.78" stop-color="#58b258"/><stop offset="1" stop-color="#b4e0b4"/></linearGradient></defs>
<rect x="3" y="50" width="58" height="5" fill="url(#rf923471)"/>
<rect x="3" y="2" width="60" height="49" rx="3" fill="#1e3a1e" opacity="0.6"/>
<rect x="2" y="1" width="60" height="49" rx="3" fill="url(#gb923471)"/>
<path d="M2 4 Q2 1 5 1 L59 1 Q62 1 62 4 L62 26.950000000000003 Q27.0 24.5 2 12.25 Z" fill="url(#gl923471)"/>
<rect x="2.5" y="1.5" width="59" height="48" rx="3" fill="none" stroke="#d8f0d8" stroke-width="0.8" opacity="0.6"/>
</svg>
<div class="t" style="left:434px;top:269px;font-size:14px;color:#8c8ce6;letter-spacing:1.4px">管检采样</div>
<div class="t" style="left:434px;top:357px;font-size:15px;color:#8c8ce6;letter-spacing:0.6px">管检采样</div>
<div class="t" style="left:503px;top:470px;font-size:20px;color:#8c8ce6;letter-spacing:1.5px">空载运行</div>
<div class="t" style="left:892px;top:461px;font-size:22px;color:#8c8ce6;letter-spacing:2px">备料段</div>
<div class="t" style="left:883px;top:168px;font-size:20px;color:#8c8ce6;letter-spacing:2px">管子总长</div>
<div class="t" style="left:883px;top:221px;font-size:20px;color:#8c8ce6;letter-spacing:2px">料头长度</div>
<div class="t" style="left:883px;top:265px;font-size:20px;color:#8c8ce6;letter-spacing:2px">尾料长度</div>
<div class="t" style="left:883px;top:318px;font-size:20px;color:#8c8ce6;letter-spacing:2px">最后夹持</div>
<div class="t" style="left:883px;top:370px;font-size:20px;color:#8c8ce6;letter-spacing:2px">加载根数</div>
<svg style="left:743px;top:473px" width="54" height="54" viewBox="0 0 54 54">
<circle cx="27.5" cy="27.5" r="24" fill="#555" opacity="0.5"/>
<circle cx="26" cy="26" r="23.5" fill="#b4b4b4"/>
<circle cx="26" cy="26" r="17.5" fill="#067806"/>
<path d="M11 21 L23 11" stroke="#f0fff0" stroke-width="2.6"/>
</svg>
<svg style="left:419px;top:553px" width="528" height="3" viewBox="0 0 528 3"><path d="M0 1.4 H528" stroke="#111" stroke-width="1.35" stroke-dasharray="8.5 3.3 3 3 3 3.2"/></svg>
<svg style="left:266px;top:140px" width="140" height="66" viewBox="0 0 140 66"><g filter="url(#noise2)"><rect width="140" height="66" fill="#0a2566"/><path d="M20 66 L75 0 L82 0 L28 66Z" fill="#061a48"/><path d="M0 55 L30 25 L34 28 L5 60Z" fill="#0a1f55"/>
<path d="M24 17 L90 52 L88 56 L22 21Z" fill="#2a55b0" opacity="0.8"/>
<path d="M50 46.5 L55 38.5 L59 46.5Z" fill="#fafafa"/><rect x="65" y="42" width="5" height="4.5" fill="#f4f4f4"/><path d="M75 46.5 Q80 36 92 38 Q99 40 99 46.5Z" fill="#fafafa"/><path d="M105 46.5 L110 38 L114 46.5Z" fill="#f4f4f4"/>
<rect x="132" y="0" width="8" height="46.5" fill="#fafafa"/><rect x="118" y="19" width="4" height="3" fill="#fff"/></g></svg>
<div class="t" style="left:313px;top:140px;font-size:32px;color:#e01818;font-family:'Liberation Serif',serif;transform-origin:0 0;transform:scaleX(0.72)">OFF</div>
<svg style="left:266px;top:231px" width="140" height="100" viewBox="0 0 140 100"><g filter="url(#noise)"><rect width="140" height="100" fill="#acb5c8"/><path d="M30 100 L32 88 L50 81 L96 81 L96 100Z" fill="#f2f2ea"/><rect x="55" y="85" width="41" height="15" fill="#e4e4dc"/>
<rect x="63.7" y="34" width="23.7" height="50" fill="#efefe8"/><rect x="83" y="36" width="4.4" height="48" fill="#c8c8c0"/><rect x="73.5" y="5" width="11" height="30" fill="#f6f6f0"/><rect x="82" y="5" width="2.5" height="30" fill="#d0d0c8"/></g></svg>
<div class="t" style="left:313px;top:265px;font-size:32px;color:#e01818;font-family:'Liberation Serif',serif;transform-origin:0 0;transform:scaleX(0.72)">OFF</div>
<svg style="left:266px;top:348px" width="140" height="100" viewBox="0 0 140 100"><g filter="url(#noise)"><rect width="140" height="100" fill="#ecebf2"/><rect x="0" y="0" width="15" height="100" fill="#b00808"/>
<path d="M14.6 17.5 L45 17.5 L55 33 L53 60.7 L14.6 60.7Z" fill="#d0d0d6"/><rect x="14.6" y="17.5" width="31" height="3" fill="#8a8a90"/>
<path d="M14.6 60.7 L53 60.7 L53 100 L14.6 100Z" fill="#747478"/><path d="M18 62 L48 100 L44 100 L15 66Z" fill="#a8a8b0"/>
<rect x="37" y="48" width="20" height="17.6" fill="#6e9c78"/>
<rect x="49" y="0" width="31.4" height="100" fill="#9c5cb0"/><rect x="54" y="0" width="1.6" height="100" fill="#4a1a60"/><rect x="60" y="0" width="1.6" height="100" fill="#4a1a60"/><rect x="66" y="0" width="1.6" height="100" fill="#4a1a60"/><rect x="73" y="0" width="1.6" height="100" fill="#4a1a60"/>
<rect x="80.4" y="23.4" width="14.6" height="61" fill="#8a6e9c" stroke="#333" stroke-width="0.8"/>
<rect x="102" y="0" width="21" height="51" fill="#a8825e"/><rect x="102" y="70" width="21" height="16" fill="#a8825e"/>
<rect x="94" y="50" width="46" height="20.5" fill="#6e9c78"/><rect x="94" y="50" width="46" height="1" fill="#222"/><rect x="94" y="69.5" width="46" height="1" fill="#222"/>
<path d="M80 70.5 L129 100 L80 100Z" fill="#6a6a6e"/><path d="M100 82 L128 100 L120 100 L96 86Z" fill="#c0c0c8"/>
<circle cx="19.5" cy="28.3" r="2.6" fill="#555"/><circle cx="33.3" cy="28.3" r="2.6" fill="#555"/></g></svg>
<svg style="left:266px;top:348px" width="15" height="100" viewBox="0 0 15 100"><g filter="url(#noise3)"><rect width="15" height="100" fill="#b40808"/></g></svg>
<div class="t" style="left:313px;top:381px;font-size:32px;color:#e01818;font-family:'Liberation Serif',serif;transform-origin:0 0;transform:scaleX(0.72)">OFF</div>
<svg style="left:266px;top:468px" width="140" height="100" viewBox="0 0 140 100"><g filter="url(#noise)"><rect width="140" height="100" fill="#ececf4"/><rect x="0" y="0" width="10.7" height="100" fill="#b00808"/>
<rect x="10.7" y="0" width="17" height="5.7" fill="#707074"/>
<path d="M88 0 L124 0 L124 22 L100 14 L88 14Z" fill="#6a6a6e"/>
<rect x="39" y="11.5" width="21" height="44" rx="9" fill="#9a9a9e"/><ellipse cx="49" cy="22" rx="8" ry="8" fill="none" stroke="#222" stroke-width="1"/><ellipse cx="49" cy="22" rx="5" ry="5" fill="none" stroke="#222" stroke-width="0.8"/>
<rect x="43" y="52" width="17" height="17.5" fill="#8040a0"/>
<path d="M114.7 10 Q114.7 2.7 124 2.7 L139 2.7 L139 99 L114.7 99Z" fill="#b0865e"/>
<rect x="124.5" y="16.5" width="14.5" height="45" fill="#333336"/>
<rect x="11.7" y="67.5" width="120" height="28.5" fill="#6e9c78"/><rect x="11.7" y="67.5" width="120" height="1" fill="#222"/><rect x="11.7" y="95" width="120" height="1" fill="#222"/>
<rect x="11.7" y="65" width="7" height="35" fill="#b4b4b8" stroke="#333" stroke-width="0.6"/><rect x="125.5" y="66" width="7" height="34" fill="#b4b4b8" stroke="#333" stroke-width="0.6"/>
<rect x="60" y="0" width="28" height="100" fill="#9c5cb0"/><rect x="64" y="0" width="1.6" height="100" fill="#4a1a60"/><rect x="70" y="0" width="1.6" height="100" fill="#4a1a60"/><rect x="76" y="0" width="1.6" height="100" fill="#4a1a60"/><rect x="82" y="0" width="1.6" height="100" fill="#4a1a60"/></g></svg>
<svg style="left:266px;top:468px" width="11" height="100" viewBox="0 0 11 100"><g filter="url(#noise3)"><rect width="11" height="100" fill="#b40808"/></g></svg>
<div class="t" style="left:313px;top:501px;font-size:32px;color:#e01818;font-family:'Liberation Serif',serif;transform-origin:0 0;transform:scaleX(0.72)">OFF</div>
<div style="left:281px;top:593px;width:118px;height:30px;background:#efefef;border:5px solid #0000c0"></div>
<svg style="left:420px;top:579px" width="140" height="40" viewBox="0 0 140 40"><g filter="url(#noise)"><rect width="140" height="40" fill="#eeeef6"/><path d="M114 6 L124 4 L127 20 L126 40 L110 40 L113 20Z" fill="#2a2a2a"/><path d="M95 40 L122 12" stroke="#888" stroke-width="1.5"/></g></svg>
<svg style="left:420px;top:582px" width="26" height="26" viewBox="0 0 26 26"><circle cx="13.5" cy="13.5" r="11" fill="#666" opacity="0.5"/><circle cx="12" cy="12" r="11" fill="#c8c8c8"/><circle cx="12" cy="12" r="8.5" fill="url(#rbtn)"/><path d="M7 11 L12 6.5" stroke="#fff" stroke-width="1.8"/></svg>
<svg style="left:609px;top:579px" width="140" height="40" viewBox="0 0 140 40"><g filter="url(#noise)"><rect width="140" height="40" fill="#eeeef6"/><path d="M12 20 L40 5 L70 15 L90 28 L92 40 L25 40Z" fill="#4a4a4a"/><path d="M35 8 L62 10 L72 22 L45 22Z" fill="#8a1818"/><path d="M105 40 L112 25 L130 22 L125 40Z" fill="#555"/></g></svg>
<svg style="left:609px;top:582px" width="26" height="26" viewBox="0 0 26 26"><circle cx="13.5" cy="13.5" r="11" fill="#666" opacity="0.5"/><circle cx="12" cy="12" r="11" fill="#c8c8c8"/><circle cx="12" cy="12" r="8.5" fill="url(#rbtn)"/><path d="M7 11 L12 6.5" stroke="#fff" stroke-width="1.8"/></svg>
<svg style="left:800px;top:579px" width="140" height="40" viewBox="0 0 140 40"><g filter="url(#noise)"><rect width="140" height="40" fill="#eeeef6"/><rect x="8" y="8" width="24" height="32" fill="#8a8a8a"/><rect x="8" y="8" width="24" height="14" fill="#b0b0b0"/><rect x="60" y="6" width="25" height="34" fill="#8a8a8a"/><rect x="60" y="6" width="25" height="14" fill="#b8b8b8"/><rect x="32" y="24" width="106" height="1.5" fill="#111"/><path d="M50 40 L62 28 L66 40Z" fill="#333"/></g></svg>
<svg style="left:800px;top:582px" width="26" height="26" viewBox="0 0 26 26"><circle cx="13.5" cy="13.5" r="11" fill="#666" opacity="0.5"/><circle cx="12" cy="12" r="11" fill="#c8c8c8"/><circle cx="12" cy="12" r="8.5" fill="url(#rbtn)"/><path d="M7 11 L12 6.5" stroke="#fff" stroke-width="1.8"/></svg>
</div>
</body></html>
